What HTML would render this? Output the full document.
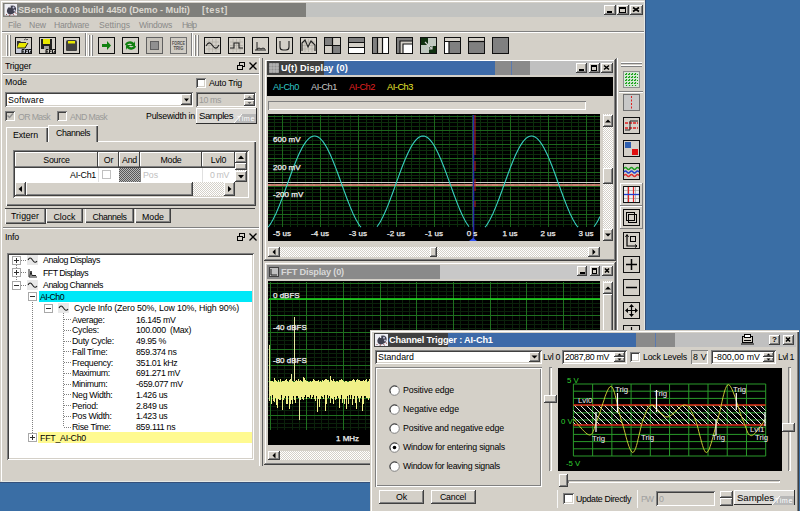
<!DOCTYPE html><html><head><meta charset="utf-8"><style>
html,body{margin:0;padding:0}
body{width:800px;height:511px;overflow:hidden;position:relative;background:#3a6ea5;font-family:"Liberation Sans",sans-serif}
div{position:absolute;box-sizing:border-box}
.t{white-space:pre}
</style></head><body>
<div style="left:0px;top:0px;width:646px;height:483px;background:#d4d0c8;box-shadow:inset -1px -1px #34507a,inset 1px 1px #d4d0c8,inset -2px -2px #e4e8e4,inset 2px 2px #fff"></div>
<div style="left:3px;top:3px;width:303px;height:14px;background:#7f7f7b"></div>
<div style="left:306px;top:3px;width:337px;height:14px;background:#c2c3c1"></div>
<svg style="position:absolute;left:4px;top:3px;" width="14" height="14" viewBox="0 0 14 14"><rect x="0.5" y="1" width="12.5" height="11.5" fill="#eeeef4"/><ellipse cx="7.5" cy="7" rx="5" ry="4" fill="#404050" transform="rotate(-40 7.5 7)"/><circle cx="6" cy="3.8" r="0.9" fill="#fff"/><circle cx="9.5" cy="4.5" r="1" fill="#c8c8e0"/><circle cx="10.5" cy="7.5" r="0.9" fill="#d0d0e8"/><path d="M3 11l-1 1M6 11.5l-0.5 1.5M9 11l1 1.5M11 9.5l1.5 1" stroke="#904040" stroke-width="0.9"/></svg>
<div class="t" style="left:18px;top:4.00px;font-size:9.2px;line-height:12px;color:#dcd8d0;font-weight:bold;letter-spacing:-0.047px;">SBench 6.0.09 build 4450 (Demo - Multi)</div>
<div class="t" style="left:202px;top:4.00px;font-size:9.2px;line-height:12px;color:#dcd8d0;font-weight:bold;letter-spacing:0.585px;">[test]</div>
<div style="left:604px;top:5px;width:12px;height:10px;background:#d4d0c8;box-shadow:inset -1px -1px #404040,inset 1px 1px #fff,inset -2px -2px #808080,inset 2px 2px #d4d0c8;"></div>
<div style="left:607px;top:11px;width:5px;height:2px;background:#000"></div>
<div style="left:617px;top:5px;width:12px;height:10px;background:#d4d0c8;box-shadow:inset -1px -1px #404040,inset 1px 1px #fff,inset -2px -2px #808080,inset 2px 2px #d4d0c8;"></div>
<div style="left:619px;top:6.5px;width:7px;height:6px;border:1px solid #000;border-top-width:2px;box-sizing:border-box"></div>
<div style="left:630px;top:5px;width:13px;height:10px;background:#d4d0c8;box-shadow:inset -1px -1px #404040,inset 1px 1px #fff,inset -2px -2px #808080,inset 2px 2px #d4d0c8;"></div>
<svg style="position:absolute;left:630px;top:5px;" width="13" height="10" viewBox="0 0 13 10"><path d="M3 2.5L9 6.5M9 2.5L3 6.5" stroke="#000" stroke-width="1.6"/></svg>
<div class="t" style="left:8px;top:19.00px;font-size:8.6px;line-height:12px;color:#8a8a88;letter-spacing:-0.214px;">File</div>
<div class="t" style="left:29px;top:19.00px;font-size:8.6px;line-height:12px;color:#8a8a88;letter-spacing:-0.068px;">New</div>
<div class="t" style="left:54px;top:19.00px;font-size:8.6px;line-height:12px;color:#8a8a88;letter-spacing:-0.285px;">Hardware</div>
<div class="t" style="left:99px;top:19.00px;font-size:8.6px;line-height:12px;color:#8a8a88;letter-spacing:-0.009px;">Settings</div>
<div class="t" style="left:139px;top:19.00px;font-size:8.6px;line-height:12px;color:#8a8a88;letter-spacing:-0.270px;">Windows</div>
<div class="t" style="left:182px;top:19.00px;font-size:8.6px;line-height:12px;color:#8a8a88;letter-spacing:-0.922px;">Help</div>
<div style="left:2px;top:31px;width:642px;height:1px;background:#808080"></div>
<div style="left:2px;top:32px;width:642px;height:1px;background:#fff"></div>
<div style="left:6px;top:35px;width:1px;height:21px;background:#fff"></div>
<div style="left:7px;top:35px;width:1px;height:21px;background:#808080"></div>
<div style="left:9px;top:35px;width:1px;height:21px;background:#fff"></div>
<div style="left:10px;top:35px;width:1px;height:21px;background:#808080"></div>
<div style="left:85px;top:33px;width:1px;height:24px;background:#808080"></div>
<div style="left:86px;top:33px;width:1px;height:24px;background:#fff"></div>
<div style="left:88px;top:35px;width:1px;height:21px;background:#fff"></div>
<div style="left:89px;top:35px;width:1px;height:21px;background:#808080"></div>
<div style="left:91px;top:35px;width:1px;height:21px;background:#fff"></div>
<div style="left:92px;top:35px;width:1px;height:21px;background:#808080"></div>
<div style="left:191px;top:33px;width:1px;height:24px;background:#808080"></div>
<div style="left:192px;top:33px;width:1px;height:24px;background:#fff"></div>
<div style="left:194px;top:35px;width:1px;height:21px;background:#fff"></div>
<div style="left:195px;top:35px;width:1px;height:21px;background:#808080"></div>
<div style="left:197px;top:35px;width:1px;height:21px;background:#fff"></div>
<div style="left:198px;top:35px;width:1px;height:21px;background:#808080"></div>
<div style="left:2px;top:56px;width:258px;height:1px;background:#f4f4f0"></div>
<div style="left:2px;top:57px;width:258px;height:1px;background:#c0bcb4"></div>
<div style="left:15px;top:37px;width:17px;height:17px;background:#c8ccd8;border:1px solid #101010;box-sizing:border-box"></div>
<svg style="position:absolute;left:15px;top:37px;" width="17" height="17" viewBox="0 0 17 17"><path d="M1 1h15v10H1z" fill="#d4d0c8"/><path d="M2 4h3l1 1h5v6H2z" fill="#303030"/><path d="M2 11l2-5h9l-3 5z" fill="#e8e800"/><path d="M2 11h8l3-5" stroke="#202020" fill="none"/><path d="M9 3q1.5-2 3 0l1-1" stroke="#303030" fill="none" stroke-width="0.8"/><path d="M9.5 12.5h-2.5v3.5h2.5M7 14.2h2M10.5 16v-3.5h2.5M10.5 14.2h2M16 12.5h-2.5v3.5h2.5v-1.7h-1" stroke="#101010" stroke-width="1" fill="none"/></svg>
<div style="left:39px;top:37px;width:17px;height:17px;background:#d4d0c8;border:1px solid #101010;box-sizing:border-box"></div>
<svg style="position:absolute;left:39px;top:37px;" width="17" height="17" viewBox="0 0 17 17"><rect x="2" y="2" width="11" height="10" fill="#202020"/><rect x="4" y="2" width="7" height="5" fill="#e8e800"/><rect x="5" y="9" width="5" height="3" fill="#a0a0a0"/><path d="M9.5 12.5h-2.5v3.5h2.5M7 14.2h2M10.5 16v-3.5h2.5M10.5 14.2h2M16 12.5h-2.5v3.5h2.5v-1.7h-1" stroke="#101010" stroke-width="1" fill="none"/></svg>
<div style="left:63px;top:37px;width:17px;height:17px;background:#d4d0c8;border:1px solid #101010;box-sizing:border-box"></div>
<svg style="position:absolute;left:63px;top:37px;" width="17" height="17" viewBox="0 0 17 17"><path d="M3 5q0-2 2-2h7q2 0 2 2v8q0 1-1 1H4q-1 0-1-1z" fill="#404040"/><rect x="5" y="4" width="7" height="2.5" fill="#e8e800"/></svg>
<div style="left:98px;top:37px;width:17px;height:17px;background:#d4d0c8;border:1px solid #101010;box-sizing:border-box"></div>
<svg style="position:absolute;left:98px;top:37px;" width="17" height="17" viewBox="0 0 17 17"><path d="M4 7h5V4l4 4.5-4 4.5V10H4z" fill="#108010"/></svg>
<div style="left:122px;top:37px;width:17px;height:17px;background:#d4d0c8;border:1px solid #101010;box-sizing:border-box"></div>
<svg style="position:absolute;left:122px;top:37px;" width="17" height="17" viewBox="0 0 17 17"><path d="M3 8a5 4 0 0 1 9-2l1-2v5h-5l2-1.5a3 2.5 0 0 0-5 1z M14 9a5 4 0 0 1-9 2l-1 2V8h5l-2 1.5a3 2.5 0 0 0 5-1z" fill="#108010"/></svg>
<div style="left:146px;top:37px;width:17px;height:17px;background:#c8c4bc;border:1px solid #606060;box-sizing:border-box"></div>
<svg style="position:absolute;left:146px;top:37px;" width="17" height="17" viewBox="0 0 17 17"><rect x="4.5" y="4.5" width="8" height="8" fill="#909090" stroke="#606060"/></svg>
<div style="left:170px;top:37px;width:17px;height:17px;background:#d0ccc4;border:1px solid #707070;box-sizing:border-box"></div>
<svg style="position:absolute;left:170px;top:37px;" width="17" height="17" viewBox="0 0 17 17"><text x="8.5" y="7.5" font-size="4.6" font-family="Liberation Sans" font-weight="bold" fill="#505050" text-anchor="middle" textLength="13" lengthAdjust="spacingAndGlyphs">FORCE</text><text x="8.5" y="13" font-size="5" font-family="Liberation Sans" font-weight="bold" fill="#505050" text-anchor="middle" textLength="10" lengthAdjust="spacingAndGlyphs">TRIG</text></svg>
<div style="left:204px;top:37px;width:17px;height:17px;background:#d4d0c8;border:1px solid #101010;box-sizing:border-box"></div>
<svg style="position:absolute;left:204px;top:37px;" width="17" height="17" viewBox="0 0 17 17"><path d="M2 5h13M2 8.5h13M2 12h13M5 2v13M8.5 2v13M12 2v13" stroke="#b0aca4" stroke-width="0.7"/><path d="M2 9 Q5 3 8.5 8.5 T15 8" stroke="#202020" fill="none" stroke-width="1.1"/></svg>
<div style="left:228px;top:37px;width:17px;height:17px;background:#d4d0c8;border:1px solid #101010;box-sizing:border-box"></div>
<svg style="position:absolute;left:228px;top:37px;" width="17" height="17" viewBox="0 0 17 17"><path d="M2 5h13M2 8.5h13M2 12h13M5 2v13M8.5 2v13M12 2v13" stroke="#b0aca4" stroke-width="0.7"/><path d="M2 11h4V6h5v5h4" stroke="#202020" fill="none" stroke-width="1.1"/></svg>
<div style="left:252px;top:37px;width:17px;height:17px;background:#d4d0c8;border:1px solid #101010;box-sizing:border-box"></div>
<svg style="position:absolute;left:252px;top:37px;" width="17" height="17" viewBox="0 0 17 17"><path d="M3 13h11M5 13V5M5 12l2-1 2 1 2-1 2 1" stroke="#202020" fill="none" stroke-width="1"/></svg>
<div style="left:276px;top:37px;width:17px;height:17px;background:#d4d0c8;border:1px solid #101010;box-sizing:border-box"></div>
<svg style="position:absolute;left:276px;top:37px;" width="17" height="17" viewBox="0 0 17 17"><path d="M4 4v6q0 3 3 3h3q3 0 3-3V4" stroke="#202020" fill="none" stroke-width="1.1"/></svg>
<div style="left:300px;top:37px;width:17px;height:17px;background:#d4d0c8;border:1px solid #101010;box-sizing:border-box"></div>
<svg style="position:absolute;left:300px;top:37px;" width="17" height="17" viewBox="0 0 17 17"><path d="M2 5h13M2 8.5h13M2 12h13M5 2v13M8.5 2v13M12 2v13" stroke="#b0aca4" stroke-width="0.7"/><path d="M2 14V6l3-3 3 7 3-6 4 4v6" stroke="#202020" fill="none" stroke-width="1.1"/></svg>
<div style="left:324px;top:37px;width:17px;height:17px;background:#d4d0c8;border:1px solid #101010;box-sizing:border-box"></div>
<svg style="position:absolute;left:324px;top:37px;" width="17" height="17" viewBox="0 0 17 17"><rect x="1" y="1" width="7.5" height="7.5" fill="#808080"/><rect x="8.5" y="8.5" width="7.5" height="7.5" fill="#808080"/><path d="M8.5 1v15M1 8.5h15" stroke="#101010" stroke-width="1.2"/></svg>
<div style="left:348px;top:37px;width:17px;height:17px;background:#d4d0c8;border:1px solid #101010;box-sizing:border-box"></div>
<svg style="position:absolute;left:348px;top:37px;" width="17" height="17" viewBox="0 0 17 17"><rect x="1" y="1" width="15" height="4" fill="#808080"/><rect x="1" y="11" width="15" height="5" fill="#fff"/><path d="M1 5.5h15M1 10.5h15" stroke="#101010" stroke-width="1.2"/></svg>
<div style="left:372px;top:37px;width:17px;height:17px;background:#d4d0c8;border:1px solid #101010;box-sizing:border-box"></div>
<svg style="position:absolute;left:372px;top:37px;" width="17" height="17" viewBox="0 0 17 17"><rect x="1" y="1" width="4" height="15" fill="#808080"/><rect x="11" y="1" width="5" height="15" fill="#fff"/><path d="M5.5 1v15M10.5 1v15" stroke="#101010" stroke-width="1.2"/></svg>
<div style="left:396px;top:37px;width:17px;height:17px;background:#d4d0c8;border:1px solid #101010;box-sizing:border-box"></div>
<svg style="position:absolute;left:396px;top:37px;" width="17" height="17" viewBox="0 0 17 17"><rect x="1" y="1" width="15" height="15" fill="#808080"/><rect x="4" y="4" width="12" height="12" fill="#d4d0c8"/><rect x="7" y="7" width="9" height="9" fill="#fff"/><path d="M4 16V4h12M7 16V7h9" stroke="#101010" stroke-width="1.1" fill="none"/></svg>
<div style="left:420px;top:37px;width:17px;height:17px;background:#c0c8c0;border:1px solid #101010;box-sizing:border-box"></div>
<svg style="position:absolute;left:420px;top:37px;" width="17" height="17" viewBox="0 0 17 17"><rect x="1" y="1" width="7" height="7" fill="#103010"/><rect x="9" y="9" width="7" height="7" fill="#103010"/><path d="M5 5l7 7M12 8v4H8" stroke="#d0d0d0" stroke-width="1.2" fill="none"/></svg>
<div style="left:444px;top:37px;width:17px;height:17px;background:#d4d0c8;border:1px solid #101010;box-sizing:border-box"></div>
<svg style="position:absolute;left:444px;top:37px;" width="17" height="17" viewBox="0 0 17 17"><rect x="1" y="5" width="15" height="11" fill="#808080"/><rect x="1" y="5" width="4" height="11" fill="#fff"/><path d="M1 4.5h15M5 5v11" stroke="#101010" stroke-width="1.2"/></svg>
<div style="left:468px;top:37px;width:17px;height:17px;background:#d4d0c8;border:1px solid #101010;box-sizing:border-box"></div>
<svg style="position:absolute;left:468px;top:37px;" width="17" height="17" viewBox="0 0 17 17"><rect x="1" y="5" width="15" height="11" fill="#808080"/><path d="M1 4.5h15" stroke="#101010" stroke-width="1.2"/></svg>
<div style="left:492px;top:37px;width:17px;height:17px;background:#808080;border:1px solid #101010;box-sizing:border-box"></div>
<div class="t" style="left:5px;top:59.50px;font-size:8.8px;line-height:12px;color:#000;letter-spacing:-0.197px;">Trigger</div>
<svg style="position:absolute;left:236px;top:61px;" width="10" height="10" viewBox="0 0 10 10"><rect x="3.5" y="1.5" width="5" height="4" fill="none" stroke="#000"/><rect x="1.5" y="4.5" width="5" height="4" fill="#d4d0c8" stroke="#000"/></svg>
<svg style="position:absolute;left:248px;top:61px;" width="10" height="10" viewBox="0 0 10 10"><path d="M1.5 1.5l7 7M8.5 1.5l-7 7" stroke="#000" stroke-width="1.3"/></svg>
<div style="left:3px;top:73px;width:256px;height:1px;background:#808080"></div>
<div style="left:3px;top:74px;width:256px;height:1px;background:#fff"></div>
<div class="t" style="left:5px;top:76.00px;font-size:8.8px;line-height:12px;color:#000;letter-spacing:-0.003px;">Mode</div>
<div style="left:196px;top:78px;width:10px;height:10px;background:#fff;box-shadow:inset 1px 1px #808080,inset -1px -1px #fff,inset 2px 2px #404040,inset -2px -2px #d4d0c8;"></div>
<div class="t" style="left:209px;top:77.00px;font-size:8.8px;line-height:12px;color:#000;letter-spacing:-0.246px;">Auto Trig</div>
<div style="left:5px;top:92px;width:188px;height:15px;background:#fff;box-shadow:inset 1px 1px #808080,inset -1px -1px #fff,inset 2px 2px #404040,inset -2px -2px #d4d0c8;"></div>
<div class="t" style="left:8px;top:93.50px;font-size:8.8px;line-height:12px;color:#000;letter-spacing:0.159px;">Software</div>
<div style="left:181px;top:94px;width:11px;height:11px;background:#d4d0c8;box-shadow:inset -1px -1px #404040,inset 1px 1px #fff,inset -2px -2px #808080,inset 2px 2px #d4d0c8;"></div>
<svg style="position:absolute;left:181px;top:94px;" width="11" height="11" viewBox="0 0 11 11"><path d="M3 4.5h5l-2.5 3z" fill="#000"/></svg>
<div style="left:196px;top:92px;width:60px;height:15px;background:#d4d0c8;box-shadow:inset 1px 1px #808080,inset -1px -1px #fff,inset 2px 2px #404040,inset -2px -2px #d4d0c8;"></div>
<div class="t" style="left:199px;top:93.50px;font-size:8.8px;line-height:12px;color:#9a9a98;letter-spacing:-0.393px;">10 ms</div>
<div style="left:244px;top:94px;width:11px;height:6px;background:#d4d0c8;box-shadow:inset -1px -1px #404040,inset 1px 1px #fff,inset -2px -2px #808080,inset 2px 2px #d4d0c8;"></div>
<div style="left:244px;top:100px;width:11px;height:6px;background:#d4d0c8;box-shadow:inset -1px -1px #404040,inset 1px 1px #fff,inset -2px -2px #808080,inset 2px 2px #d4d0c8;"></div>
<svg style="position:absolute;left:244px;top:94px;" width="11" height="12" viewBox="0 0 11 12"><path d="M3.5 4h4l-2-2z M3.5 8h4l-2 2z" fill="#606060"/></svg>
<div style="left:5px;top:111px;width:10px;height:10px;background:#d4d0c8;box-shadow:inset 1px 1px #808080,inset -1px -1px #fff,inset 2px 2px #404040,inset -2px -2px #d4d0c8;"></div>
<svg style="position:absolute;left:5px;top:111px;" width="10" height="10" viewBox="0 0 10 10"><path d="M2.5 4.5l2 2 3.5-4" stroke="#909090" stroke-width="1.5" fill="none"/></svg>
<div class="t" style="left:18px;top:110.50px;font-size:8.8px;line-height:12px;color:#9a9a98;letter-spacing:-0.667px;">OR Mask</div>
<div style="left:57px;top:111px;width:10px;height:10px;background:#d4d0c8;box-shadow:inset 1px 1px #808080,inset -1px -1px #fff,inset 2px 2px #404040,inset -2px -2px #d4d0c8;"></div>
<div class="t" style="left:70px;top:110.50px;font-size:8.8px;line-height:12px;color:#9a9a98;letter-spacing:-0.631px;">AND Mask</div>
<div class="t" style="left:146px;top:110.00px;font-size:8.8px;line-height:12px;color:#000;letter-spacing:-0.219px;">Pulsewidth in</div>
<div style="left:196px;top:108px;width:61px;height:16px;background:#dcdad6;box-shadow:inset -1px -1px #303030,inset 1px 1px #fff"></div>
<svg style="position:absolute;left:196px;top:108px;" width="61" height="15" viewBox="0 0 61 15"><path d="M38 15 L46 6 H60 V15 Z" fill="#b8b8b8"/><path d="M38 15 L46 6" stroke="#fff" stroke-width="1"/></svg>
<div class="t" style="left:199px;top:109.50px;font-size:9.6px;line-height:12px;color:#000;letter-spacing:-0.479px;">Samples</div>
<div class="t" style="left:46px;top:-6.00px;font-size:8px;line-height:12px;color:#000;letter-spacing:0.000px;"></div>
<div class="t" style="left:237px;top:112.50px;font-size:7.2px;line-height:12px;color:#fff;letter-spacing:0.566px;">Time</div>
<div style="left:6px;top:141px;width:250px;height:65px;box-shadow:inset 1px 1px #fff,inset -1px -1px #404040,inset -2px -2px #808080"></div>
<div style="left:6px;top:127px;width:42px;height:15px;background:#d4d0c8;box-shadow:inset 1px 1px #fff,inset -1px 0 #404040,inset -2px 0 #808080"></div>
<div class="t" style="left:13px;top:129.00px;font-size:8.8px;line-height:12px;color:#000;letter-spacing:-0.072px;">Extern</div>
<div style="left:48px;top:125px;width:50px;height:17px;background:#d4d0c8;box-shadow:inset 1px 1px #fff,inset -1px 0 #404040,inset -2px 0 #808080"></div>
<div class="t" style="left:56px;top:127.00px;font-size:8.8px;line-height:12px;color:#000;letter-spacing:-0.397px;">Channels</div>
<div style="left:13px;top:150px;width:236px;height:48px;background:#d4d0c8;box-shadow:inset 1px 1px #808080,inset -1px -1px #fff,inset 2px 2px #404040,inset -2px -2px #d4d0c8;"></div>
<div style="left:15px;top:152px;width:83px;height:15px;background:#d4d0c8;box-shadow:inset -1px -1px #808080,inset 1px 1px #fff;"></div>
<div style="left:97px;top:152px;width:1px;height:15px;background:#404040"></div>
<div class="t" style="left:43.2556640625px;top:153.50px;font-size:8.8px;line-height:12px;color:#000;letter-spacing:-0.232px;">Source</div>
<div style="left:98px;top:152px;width:21px;height:15px;background:#d4d0c8;box-shadow:inset -1px -1px #808080,inset 1px 1px #fff;"></div>
<div style="left:118px;top:152px;width:1px;height:15px;background:#404040"></div>
<div class="t" style="left:103.8561328125px;top:153.50px;font-size:8.8px;line-height:12px;color:#000;letter-spacing:-0.244px;">Or</div>
<div style="left:119px;top:152px;width:21px;height:15px;background:#d4d0c8;box-shadow:inset -1px -1px #808080,inset 1px 1px #fff;"></div>
<div style="left:139px;top:152px;width:1px;height:15px;background:#404040"></div>
<div class="t" style="left:122.0625390625px;top:153.50px;font-size:8.8px;line-height:12px;color:#000;letter-spacing:-0.261px;">And</div>
<div style="left:140px;top:152px;width:62px;height:15px;background:#d4d0c8;box-shadow:inset -1px -1px #808080,inset 1px 1px #fff;"></div>
<div style="left:201px;top:152px;width:1px;height:15px;background:#404040"></div>
<div class="t" style="left:160.5440625px;top:153.50px;font-size:8.8px;line-height:12px;color:#000;letter-spacing:-0.275px;">Mode</div>
<div style="left:202px;top:152px;width:33px;height:15px;background:#d4d0c8;box-shadow:inset -1px -1px #808080,inset 1px 1px #fff;"></div>
<div style="left:234px;top:152px;width:1px;height:15px;background:#404040"></div>
<div class="t" style="left:210.8324609375px;top:153.50px;font-size:8.8px;line-height:12px;color:#000;letter-spacing:-0.202px;">Lvl0</div>
<div style="left:15px;top:167px;width:220px;height:1px;background:#404040"></div>
<div style="left:15px;top:168px;width:83px;height:14px;background:#fff"></div>
<div class="t" style="left:70px;top:169.00px;font-size:8.8px;line-height:12px;color:#000;letter-spacing:-0.232px;">AI-Ch1</div>
<div style="left:98px;top:168px;width:21px;height:14px;background:#fff"></div>
<div style="left:102px;top:170px;width:9px;height:9px;border:1px solid #c0c0c0;background:#fff"></div>
<div style="left:119px;top:168px;width:21px;height:14px;background:repeating-conic-gradient(#585858 0 25%,#b8b8b8 0 50%) 0 0/2px 2px"></div>
<div style="left:140px;top:168px;width:62px;height:14px;background:#fff"></div>
<div class="t" style="left:143px;top:169.00px;font-size:8.8px;line-height:12px;color:#c0c0c0;letter-spacing:-0.055px;">Pos</div>
<div style="left:202px;top:168px;width:33px;height:14px;background:#fff"></div>
<div class="t" style="left:210px;top:169.00px;font-size:8.8px;line-height:12px;color:#c0c0c0;letter-spacing:-0.385px;">0 mV</div>
<div style="left:98px;top:168px;width:1px;height:14px;background:#e0e0e0"></div>
<div style="left:140px;top:168px;width:1px;height:14px;background:#808080"></div>
<div style="left:202px;top:168px;width:1px;height:14px;background:#e0e0e0"></div>
<div style="left:235px;top:152px;width:12px;height:30px;background:repeating-conic-gradient(#d4d0c8 0 25%,#fff 0 50%) 0 0/2px 2px"></div>
<div style="left:235px;top:152px;width:12px;height:11px;background:#d4d0c8;box-shadow:inset -1px -1px #404040,inset 1px 1px #fff,inset -2px -2px #808080,inset 2px 2px #d4d0c8;"></div>
<svg style="position:absolute;left:235px;top:152px;" width="12" height="11" viewBox="0 0 12 11"><path d="M3 7h6l-3-3.5z" fill="#000"/></svg>
<div style="left:235px;top:163px;width:12px;height:7px;background:#d4d0c8;box-shadow:inset -1px -1px #404040,inset 1px 1px #fff,inset -2px -2px #808080,inset 2px 2px #d4d0c8;"></div>
<div style="left:235px;top:171px;width:12px;height:11px;background:#d4d0c8;box-shadow:inset -1px -1px #404040,inset 1px 1px #fff,inset -2px -2px #808080,inset 2px 2px #d4d0c8;"></div>
<svg style="position:absolute;left:235px;top:171px;" width="12" height="11" viewBox="0 0 12 11"><path d="M3 4h6l-3 3.5z" fill="#000"/></svg>
<div style="left:15px;top:182px;width:220px;height:14px;background:repeating-conic-gradient(#d4d0c8 0 25%,#fff 0 50%) 0 0/2px 2px"></div>
<div style="left:15px;top:182px;width:11px;height:14px;background:#d4d0c8;box-shadow:inset -1px -1px #404040,inset 1px 1px #fff,inset -2px -2px #808080,inset 2px 2px #d4d0c8;"></div>
<svg style="position:absolute;left:15px;top:182px;" width="11" height="14" viewBox="0 0 11 14"><path d="M7 4v6l-3.5-3z" fill="#000"/></svg>
<div style="left:26px;top:182px;width:167px;height:14px;background:#d4d0c8;box-shadow:inset -1px -1px #404040,inset 1px 1px #fff,inset -2px -2px #808080,inset 2px 2px #d4d0c8;"></div>
<div style="left:224px;top:182px;width:11px;height:14px;background:#d4d0c8;box-shadow:inset -1px -1px #404040,inset 1px 1px #fff,inset -2px -2px #808080,inset 2px 2px #d4d0c8;"></div>
<svg style="position:absolute;left:224px;top:182px;" width="11" height="14" viewBox="0 0 11 14"><path d="M4 4v6l3.5-3z" fill="#000"/></svg>
<div style="left:235px;top:182px;width:12px;height:14px;background:#d4d0c8"></div>
<div style="left:5px;top:208px;width:41px;height:16px;background:#d4d0c8;box-shadow:inset 1px 0 #fff,inset -1px -1px #404040,inset -2px -2px #808080"></div>
<div class="t" style="left:11px;top:210.00px;font-size:8.8px;line-height:12px;color:#000;letter-spacing:0.065px;">Trigger</div>
<div style="left:46px;top:209px;width:37px;height:14px;box-shadow:inset 1px 0 #fff,inset -1px -1px #404040,inset -2px -2px #808080"></div>
<div class="t" style="left:53.5px;top:210.50px;font-size:8.8px;line-height:12px;color:#000;letter-spacing:-0.001px;">Clock</div>
<div style="left:85px;top:209px;width:49px;height:14px;box-shadow:inset 1px 0 #fff,inset -1px -1px #404040,inset -2px -2px #808080"></div>
<div class="t" style="left:92.5px;top:210.50px;font-size:8.8px;line-height:12px;color:#000;letter-spacing:-0.397px;">Channels</div>
<div style="left:135px;top:209px;width:36px;height:14px;box-shadow:inset 1px 0 #fff,inset -1px -1px #404040,inset -2px -2px #808080"></div>
<div class="t" style="left:142.0px;top:210.50px;font-size:8.8px;line-height:12px;color:#000;letter-spacing:-0.003px;">Mode</div>
<div style="left:5px;top:208px;width:250px;height:1px;background:#404040"></div>
<div style="left:3px;top:227px;width:256px;height:1px;background:#808080"></div>
<div style="left:3px;top:228px;width:256px;height:1px;background:#fff"></div>
<div class="t" style="left:5px;top:230.50px;font-size:8.8px;line-height:12px;color:#000;letter-spacing:-0.183px;">Info</div>
<svg style="position:absolute;left:236px;top:232px;" width="10" height="10" viewBox="0 0 10 10"><rect x="3.5" y="1.5" width="5" height="4" fill="none" stroke="#000"/><rect x="1.5" y="4.5" width="5" height="4" fill="#d4d0c8" stroke="#000"/></svg>
<svg style="position:absolute;left:248px;top:232px;" width="10" height="10" viewBox="0 0 10 10"><path d="M1.5 1.5l7 7M8.5 1.5l-7 7" stroke="#000" stroke-width="1.3"/></svg>
<div style="left:7px;top:253px;width:247px;height:207px;background:#fff;box-shadow:inset 1px 1px #808080,inset -1px -1px #fff,inset 2px 2px #404040,inset -2px -2px #d4d0c8;"></div>
<div style="left:16px;top:257px;width:1px;height:32px;background:repeating-linear-gradient(#808080 0 1px,transparent 1px 2px)"></div>
<div style="left:12px;top:255.5px;width:9px;height:9px;border:1px solid #a8a8a8;background:#fff"></div>
<div style="left:14px;top:259.5px;width:5px;height:1px;background:#303030"></div>
<div style="left:16px;top:257.5px;width:1px;height:5px;background:#303030"></div>
<div style="left:21px;top:260px;width:5px;height:1px;background:repeating-linear-gradient(90deg,#808080 0 1px,transparent 1px 2px)"></div>
<svg style="position:absolute;left:27px;top:255px;" width="11" height="10" viewBox="0 0 11 10"><rect x="0" y="0" width="11" height="10" fill="#e8e8e8"/><path d="M1 5 Q3 1 5.5 5 T10 6" stroke="#202020" fill="none" stroke-width="1.1"/></svg>
<div class="t" style="left:43px;top:254.00px;font-size:8.8px;line-height:12px;color:#000;letter-spacing:-0.406px;">Analog Displays</div>
<div style="left:12px;top:268.0px;width:9px;height:9px;border:1px solid #a8a8a8;background:#fff"></div>
<div style="left:14px;top:272.0px;width:5px;height:1px;background:#303030"></div>
<div style="left:16px;top:270.0px;width:1px;height:5px;background:#303030"></div>
<div style="left:21px;top:272px;width:5px;height:1px;background:repeating-linear-gradient(90deg,#808080 0 1px,transparent 1px 2px)"></div>
<svg style="position:absolute;left:27px;top:267.5px;" width="11" height="10" viewBox="0 0 11 10"><path d="M2 1v8h8M3 8l1-5 1 5 1-1 1 1 1-1 1 1" stroke="#202020" fill="none" stroke-width="1"/></svg>
<div class="t" style="left:43px;top:266.50px;font-size:8.8px;line-height:12px;color:#000;letter-spacing:-0.555px;">FFT Displays</div>
<div style="left:12px;top:280.5px;width:9px;height:9px;border:1px solid #a8a8a8;background:#fff"></div>
<div style="left:14px;top:284.5px;width:5px;height:1px;background:#303030"></div>
<div style="left:21px;top:285px;width:5px;height:1px;background:repeating-linear-gradient(90deg,#808080 0 1px,transparent 1px 2px)"></div>
<svg style="position:absolute;left:27px;top:280px;" width="11" height="10" viewBox="0 0 11 10"><rect x="0" y="0" width="11" height="10" fill="#e8e8e8"/><path d="M1 5 Q3 1 5.5 5 T10 6" stroke="#202020" fill="none" stroke-width="1.1"/></svg>
<div class="t" style="left:43px;top:279.00px;font-size:8.8px;line-height:12px;color:#000;letter-spacing:-0.468px;">Analog Channels</div>
<div style="left:32px;top:292px;width:1px;height:148px;background:repeating-linear-gradient(#808080 0 1px,transparent 1px 2px)"></div>
<div style="left:39px;top:291px;width:213px;height:11px;background:#00e8f8"></div>
<div style="left:28px;top:292px;width:9px;height:9px;border:1px solid #a8a8a8;background:#fff"></div>
<div style="left:30px;top:296px;width:5px;height:1px;background:#303030"></div>
<div class="t" style="left:40px;top:290.50px;font-size:8.8px;line-height:12px;color:#000;letter-spacing:-0.565px;">AI-Ch0</div>
<div style="left:44px;top:303.5px;width:9px;height:9px;border:1px solid #a8a8a8;background:#fff"></div>
<div style="left:46px;top:307.5px;width:5px;height:1px;background:#303030"></div>
<svg style="position:absolute;left:58px;top:303px;" width="11" height="10" viewBox="0 0 11 10"><rect x="0" y="0" width="11" height="10" fill="#e8e8e8"/><path d="M1 5 Q3 1 5.5 5 T10 6" stroke="#202020" fill="none" stroke-width="1.1"/></svg>
<div class="t" style="left:74px;top:302.00px;font-size:8.8px;line-height:12px;color:#000;letter-spacing:-0.118px;">Cycle Info (Zero 50%, Low 10%, High 90%)</div>
<div style="left:63px;top:313px;width:1px;height:114px;background:repeating-linear-gradient(#808080 0 1px,transparent 1px 2px)"></div>
<div style="left:64px;top:319px;width:7px;height:1px;background:repeating-linear-gradient(90deg,#808080 0 1px,transparent 1px 2px)"></div>
<div class="t" style="left:72px;top:313.50px;font-size:8.8px;line-height:12px;color:#000;letter-spacing:-0.307px;">Average:</div>
<div class="t" style="left:136px;top:313.50px;font-size:8.8px;line-height:12px;color:#000;letter-spacing:-0.331px;">16.145 mV</div>
<div style="left:64px;top:330px;width:7px;height:1px;background:repeating-linear-gradient(90deg,#808080 0 1px,transparent 1px 2px)"></div>
<div class="t" style="left:72px;top:324.25px;font-size:8.8px;line-height:12px;color:#000;letter-spacing:-0.288px;">Cycles:</div>
<div class="t" style="left:136px;top:324.25px;font-size:8.8px;line-height:12px;color:#000;letter-spacing:-0.296px;">100.000  (Max)</div>
<div style="left:64px;top:341px;width:7px;height:1px;background:repeating-linear-gradient(90deg,#808080 0 1px,transparent 1px 2px)"></div>
<div class="t" style="left:72px;top:335.00px;font-size:8.8px;line-height:12px;color:#000;letter-spacing:-0.286px;">Duty Cycle:</div>
<div class="t" style="left:136px;top:335.00px;font-size:8.8px;line-height:12px;color:#000;letter-spacing:-0.323px;">49.95 %</div>
<div style="left:64px;top:351px;width:7px;height:1px;background:repeating-linear-gradient(90deg,#808080 0 1px,transparent 1px 2px)"></div>
<div class="t" style="left:72px;top:345.75px;font-size:8.8px;line-height:12px;color:#000;letter-spacing:-0.267px;">Fall Time:</div>
<div class="t" style="left:136px;top:345.75px;font-size:8.8px;line-height:12px;color:#000;letter-spacing:-0.305px;">859.374 ns</div>
<div style="left:64px;top:362px;width:7px;height:1px;background:repeating-linear-gradient(90deg,#808080 0 1px,transparent 1px 2px)"></div>
<div class="t" style="left:72px;top:356.50px;font-size:8.8px;line-height:12px;color:#000;letter-spacing:-0.308px;">Frequency:</div>
<div class="t" style="left:136px;top:356.50px;font-size:8.8px;line-height:12px;color:#000;letter-spacing:-0.312px;">351.01 kHz</div>
<div style="left:64px;top:373px;width:7px;height:1px;background:repeating-linear-gradient(90deg,#808080 0 1px,transparent 1px 2px)"></div>
<div class="t" style="left:72px;top:367.25px;font-size:8.8px;line-height:12px;color:#000;letter-spacing:-0.355px;">Maximum:</div>
<div class="t" style="left:136px;top:367.25px;font-size:8.8px;line-height:12px;color:#000;letter-spacing:-0.332px;">691.271 mV</div>
<div style="left:64px;top:384px;width:7px;height:1px;background:repeating-linear-gradient(90deg,#808080 0 1px,transparent 1px 2px)"></div>
<div class="t" style="left:72px;top:378.00px;font-size:8.8px;line-height:12px;color:#000;letter-spacing:-0.334px;">Minimum:</div>
<div class="t" style="left:136px;top:378.00px;font-size:8.8px;line-height:12px;color:#000;letter-spacing:-0.321px;">-659.077 mV</div>
<div style="left:64px;top:394px;width:7px;height:1px;background:repeating-linear-gradient(90deg,#808080 0 1px,transparent 1px 2px)"></div>
<div class="t" style="left:72px;top:388.75px;font-size:8.8px;line-height:12px;color:#000;letter-spacing:-0.305px;">Neg Width:</div>
<div class="t" style="left:136px;top:388.75px;font-size:8.8px;line-height:12px;color:#000;letter-spacing:-0.295px;">1.426 us</div>
<div style="left:64px;top:405px;width:7px;height:1px;background:repeating-linear-gradient(90deg,#808080 0 1px,transparent 1px 2px)"></div>
<div class="t" style="left:72px;top:399.50px;font-size:8.8px;line-height:12px;color:#000;letter-spacing:-0.279px;">Period:</div>
<div class="t" style="left:136px;top:399.50px;font-size:8.8px;line-height:12px;color:#000;letter-spacing:-0.295px;">2.849 us</div>
<div style="left:64px;top:416px;width:7px;height:1px;background:repeating-linear-gradient(90deg,#808080 0 1px,transparent 1px 2px)"></div>
<div class="t" style="left:72px;top:410.25px;font-size:8.8px;line-height:12px;color:#000;letter-spacing:-0.298px;">Pos Width:</div>
<div class="t" style="left:136px;top:410.25px;font-size:8.8px;line-height:12px;color:#000;letter-spacing:-0.295px;">1.423 us</div>
<div style="left:64px;top:427px;width:7px;height:1px;background:repeating-linear-gradient(90deg,#808080 0 1px,transparent 1px 2px)"></div>
<div class="t" style="left:72px;top:421.00px;font-size:8.8px;line-height:12px;color:#000;letter-spacing:-0.291px;">Rise Time:</div>
<div class="t" style="left:136px;top:421.00px;font-size:8.8px;line-height:12px;color:#000;letter-spacing:-0.296px;">859.111 ns</div>
<div style="left:38px;top:432px;width:214px;height:11px;background:#fffa90"></div>
<div style="left:28px;top:433px;width:9px;height:9px;border:1px solid #a8a8a8;background:#fff"></div>
<div style="left:30px;top:437px;width:5px;height:1px;background:#303030"></div>
<div style="left:32px;top:435px;width:1px;height:5px;background:#303030"></div>
<div class="t" style="left:40px;top:432.00px;font-size:8.8px;line-height:12px;color:#000;letter-spacing:-0.241px;">FFT_AI-Ch0</div>
<div style="left:259px;top:58px;width:1px;height:408px;background:#fff"></div>
<div style="left:262px;top:58px;width:1px;height:408px;background:#606060"></div>
<div style="left:264px;top:59px;width:352px;height:202px;background:#d4d0c8;box-shadow:inset -1px -1px #404040,inset 1px 1px #d4d0c8,inset -2px -2px #808080,inset 2px 2px #fff"></div>
<div style="left:267px;top:61px;width:57px;height:14px;background:#404040"></div>
<div style="left:324px;top:61px;width:171px;height:14px;background:#3d6aa8"></div>
<div style="left:495px;top:61px;width:35px;height:14px;background:#8a8a8a"></div>
<div style="left:511px;top:61px;width:1px;height:14px;background:#5a7ab0"></div>
<div style="left:530px;top:61px;width:83px;height:14px;background:#c0c0c0"></div>
<svg style="position:absolute;left:269px;top:63px;" width="10" height="10" viewBox="0 0 10 10"><rect width="10" height="10" fill="#909090"/><path d="M0 2h10M0 5h10M0 8h10M2 0v10M5 0v10M8 0v10" stroke="#d0d0d0" stroke-width="0.6"/></svg>
<div class="t" style="left:281px;top:62.00px;font-size:9.2px;line-height:12px;color:#fff;font-weight:bold;letter-spacing:0.130px;">U(t) Display (0)</div>
<div style="left:576px;top:63px;width:11px;height:10px;background:#d4d0c8;box-shadow:inset -1px -1px #404040,inset 1px 1px #fff,inset -2px -2px #808080,inset 2px 2px #d4d0c8;"></div>
<div style="left:579px;top:69px;width:5px;height:2px;background:#000"></div>
<div style="left:589px;top:63px;width:11px;height:10px;background:#d4d0c8;box-shadow:inset -1px -1px #404040,inset 1px 1px #fff,inset -2px -2px #808080,inset 2px 2px #d4d0c8;"></div>
<div style="left:591px;top:64.5px;width:6px;height:6px;border:1px solid #000;border-top-width:2px;box-sizing:border-box"></div>
<div style="left:601px;top:63px;width:12px;height:10px;background:#d4d0c8;box-shadow:inset -1px -1px #404040,inset 1px 1px #fff,inset -2px -2px #808080,inset 2px 2px #d4d0c8;"></div>
<svg style="position:absolute;left:601px;top:63px;" width="12" height="10" viewBox="0 0 12 10"><path d="M3 2.5L8 6.5M8 2.5L3 6.5" stroke="#000" stroke-width="1.6"/></svg>
<div style="left:267px;top:77px;width:346px;height:19px;background:#000"></div>
<div class="t" style="left:273px;top:81.00px;font-size:9.2px;line-height:12px;color:#30c8c8;letter-spacing:-0.439px;">AI-Ch0</div>
<div class="t" style="left:311px;top:81.00px;font-size:9.2px;line-height:12px;color:#c8c8c8;letter-spacing:-0.439px;">AI-Ch1</div>
<div class="t" style="left:349px;top:81.00px;font-size:9.2px;line-height:12px;color:#e02020;letter-spacing:-0.439px;">AI-Ch2</div>
<div class="t" style="left:387px;top:81.00px;font-size:9.2px;line-height:12px;color:#e8e830;letter-spacing:-0.439px;">AI-Ch3</div>
<div style="left:268px;top:101px;width:318px;height:9px;background:#d8d4cc;box-shadow:inset 1px 1px #808080,inset -1px -1px #fff;"></div>
<svg style="position:absolute;left:268px;top:114px;shape-rendering:auto" width="332" height="127" viewBox="0 0 332 127"><rect width="332" height="127" fill="#000"/><path d="M6.5 1V113M14.5 1V113M22.5 1V113M29.5 1V113M37.5 1V113M44.5 1V113M52.5 1V113M60.5 1V113M67.5 1V113M75.5 1V113M82.5 1V113M90.5 1V113M98.5 1V113M105.5 1V113M113.5 1V113M120.5 1V113M128.5 1V113M136.5 1V113M143.5 1V113M151.5 1V113M158.5 1V113M166.5 1V113M174.5 1V113M181.5 1V113M189.5 1V113M196.5 1V113M204.5 1V113M212.5 1V113M219.5 1V113M227.5 1V113M234.5 1V113M242.5 1V113M250.5 1V113M257.5 1V113M265.5 1V113M272.5 1V113M280.5 1V113M288.5 1V113M295.5 1V113M303.5 1V113M310.5 1V113M318.5 1V113M326.5 1V113M0 2.5H332M0 5.5H332M0 8.5H332M0 12.5H332M0 16.5H332M0 19.5H332M0 22.5H332M0 26.5H332M0 30.5H332M0 33.5H332M0 36.5H332M0 40.5H332M0 44.5H332M0 47.5H332M0 50.5H332M0 54.5H332M0 58.5H332M0 61.5H332M0 64.5H332M0 68.5H332M0 72.5H332M0 75.5H332M0 78.5H332M0 82.5H332M0 86.5H332M0 89.5H332M0 92.5H332M0 96.5H332M0 100.5H332M0 103.5H332M0 106.5H332M0 110.5H332" stroke="#0c2e0c" stroke-width="1" fill="none" shape-rendering="crispEdges"/><path d="M14.5 1V113M52.5 1V113M90.5 1V113M128.5 1V113M166.5 1V113M204.5 1V113M242.5 1V113M280.5 1V113M318.5 1V113M0 2.5H332M0 16.5H332M0 30.5H332M0 44.5H332M0 58.5H332M0 72.5H332M0 86.5H332M0 100.5H332" stroke="#1c661c" stroke-width="1" fill="none" shape-rendering="crispEdges"/><path d="M0 68.5H332" stroke="#d0d0c8" stroke-width="1"/><path d="M0 71H332" stroke="#c07868" stroke-width="2"/><path d="M0 71H332" stroke="#d88878" stroke-width="1.2" stroke-dasharray="3 5 6 4 2 7"/><polyline points="0.0,113.2 1.0,112.0 2.0,110.6 3.0,109.0 4.0,107.3 5.0,105.5 6.0,103.6 7.0,101.5 8.0,99.4 9.0,97.1 10.0,94.8 11.0,92.4 12.0,89.9 13.0,87.3 14.0,84.7 15.0,82.0 16.0,79.3 17.0,76.6 18.0,73.8 19.0,71.0 20.0,68.3 21.0,65.5 22.0,62.7 23.0,60.0 24.0,57.3 25.0,54.6 26.0,52.0 27.0,49.5 28.0,47.0 29.0,44.6 30.0,42.3 31.0,40.1 32.0,38.0 33.0,35.9 34.0,34.0 35.0,32.3 36.0,30.6 37.0,29.1 38.0,27.7 39.0,26.5 40.0,25.4 41.0,24.4 42.0,23.6 43.0,23.0 44.0,22.5 45.0,22.2 46.0,22.0 47.0,22.0 48.0,22.2 49.0,22.5 50.0,23.0 51.0,23.6 52.0,24.4 53.0,25.4 54.0,26.5 55.0,27.7 56.0,29.1 57.0,30.6 58.0,32.3 59.0,34.0 60.0,35.9 61.0,38.0 62.0,40.1 63.0,42.3 64.0,44.6 65.0,47.0 66.0,49.5 67.0,52.0 68.0,54.6 69.0,57.3 70.0,60.0 71.0,62.7 72.0,65.5 73.0,68.3 74.0,71.0 75.0,73.8 76.0,76.6 77.0,79.3 78.0,82.0 79.0,84.7 80.0,87.3 81.0,89.9 82.0,92.4 83.0,94.8 84.0,97.1 85.0,99.4 86.0,101.5 87.0,103.6 88.0,105.5 89.0,107.3 90.0,109.0 91.0,110.6 92.0,112.0 93.0,113.2" stroke="#38d0c0" fill="none" stroke-width="1.1"/><polyline points="109.0,112.6 110.0,111.3 111.0,109.8 112.0,108.2 113.0,106.4 114.0,104.5 115.0,102.6 116.0,100.5 117.0,98.3 118.0,96.0 119.0,93.6 120.0,91.1 121.0,88.6 122.0,86.0 123.0,83.4 124.0,80.7 125.0,78.0 126.0,75.2 127.0,72.4 128.0,69.7 129.0,66.9 130.0,64.1 131.0,61.4 132.0,58.6 133.0,56.0 134.0,53.3 135.0,50.8 136.0,48.2 137.0,45.8 138.0,43.4 139.0,41.2 140.0,39.0 141.0,36.9 142.0,35.0 143.0,33.1 144.0,31.4 145.0,29.8 146.0,28.4 147.0,27.1 148.0,25.9 149.0,24.9 150.0,24.0 151.0,23.3 152.0,22.7 153.0,22.3 154.0,22.1 155.0,22.0 156.0,22.1 157.0,22.3 158.0,22.7 159.0,23.3 160.0,24.0 161.0,24.9 162.0,25.9 163.0,27.1 164.0,28.4 165.0,29.8 166.0,31.4 167.0,33.1 168.0,35.0 169.0,36.9 170.0,39.0 171.0,41.2 172.0,43.4 173.0,45.8 174.0,48.2 175.0,50.8 176.0,53.3 177.0,56.0 178.0,58.6 179.0,61.4 180.0,64.1 181.0,66.9 182.0,69.7 183.0,72.4 184.0,75.2 185.0,78.0 186.0,80.7 187.0,83.4 188.0,86.0 189.0,88.6 190.0,91.1 191.0,93.6 192.0,96.0 193.0,98.3 194.0,100.5 195.0,102.6 196.0,104.5 197.0,106.4 198.0,108.2 199.0,109.8 200.0,111.3 201.0,112.6" stroke="#38d0c0" fill="none" stroke-width="1.1"/><polyline points="217.0,113.2 218.0,112.0 219.0,110.6 220.0,109.0 221.0,107.3 222.0,105.5 223.0,103.6 224.0,101.5 225.0,99.4 226.0,97.1 227.0,94.8 228.0,92.4 229.0,89.9 230.0,87.3 231.0,84.7 232.0,82.0 233.0,79.3 234.0,76.6 235.0,73.8 236.0,71.0 237.0,68.3 238.0,65.5 239.0,62.7 240.0,60.0 241.0,57.3 242.0,54.6 243.0,52.0 244.0,49.5 245.0,47.0 246.0,44.6 247.0,42.3 248.0,40.1 249.0,38.0 250.0,35.9 251.0,34.0 252.0,32.3 253.0,30.6 254.0,29.1 255.0,27.7 256.0,26.5 257.0,25.4 258.0,24.4 259.0,23.6 260.0,23.0 261.0,22.5 262.0,22.2 263.0,22.0 264.0,22.0 265.0,22.2 266.0,22.5 267.0,23.0 268.0,23.6 269.0,24.4 270.0,25.4 271.0,26.5 272.0,27.7 273.0,29.1 274.0,30.6 275.0,32.3 276.0,34.0 277.0,35.9 278.0,38.0 279.0,40.1 280.0,42.3 281.0,44.6 282.0,47.0 283.0,49.5 284.0,52.0 285.0,54.6 286.0,57.3 287.0,60.0 288.0,62.7 289.0,65.5 290.0,68.3 291.0,71.0 292.0,73.8 293.0,76.6 294.0,79.3 295.0,82.0 296.0,84.7 297.0,87.3 298.0,89.9 299.0,92.4 300.0,94.8 301.0,97.1 302.0,99.4 303.0,101.5 304.0,103.6 305.0,105.5 306.0,107.3 307.0,109.0 308.0,110.6 309.0,112.0 310.0,113.2" stroke="#38d0c0" fill="none" stroke-width="1.1"/><polyline points="326.0,112.6 327.0,111.3 328.0,109.8 329.0,108.2 330.0,106.4 331.0,104.5 332.0,102.6" stroke="#38d0c0" fill="none" stroke-width="1.1"/><path d="M205.5 1V127" stroke="#2828a8" stroke-width="1.6"/><path d="M207 1V113" stroke="#c02020" stroke-width="1" stroke-dasharray="40 6 10 8 12 10 6 40"/><text x="5" y="28" font-size="8" font-family="Liberation Sans" fill="#f4f4f4" stroke="#f4f4f4" stroke-width="0.25">600 mV</text><text x="5" y="55.5" font-size="8" font-family="Liberation Sans" fill="#f4f4f4" stroke="#f4f4f4" stroke-width="0.25">200 mV</text><text x="5" y="83" font-size="8" font-family="Liberation Sans" fill="#f4f4f4" stroke="#f4f4f4" stroke-width="0.25">-200 mV</text><text x="14" y="122" font-size="8" font-family="Liberation Sans" fill="#f0f0f0" stroke="#f0f0f0" stroke-width="0.25" text-anchor="middle">-5 us</text><text x="52" y="122" font-size="8" font-family="Liberation Sans" fill="#f0f0f0" stroke="#f0f0f0" stroke-width="0.25" text-anchor="middle">-4 us</text><text x="90" y="122" font-size="8" font-family="Liberation Sans" fill="#f0f0f0" stroke="#f0f0f0" stroke-width="0.25" text-anchor="middle">-3 us</text><text x="128" y="122" font-size="8" font-family="Liberation Sans" fill="#f0f0f0" stroke="#f0f0f0" stroke-width="0.25" text-anchor="middle">-2 us</text><text x="166" y="122" font-size="8" font-family="Liberation Sans" fill="#f0f0f0" stroke="#f0f0f0" stroke-width="0.25" text-anchor="middle">-1 us</text><text x="204" y="122" font-size="8" font-family="Liberation Sans" fill="#f0f0f0" stroke="#f0f0f0" stroke-width="0.25" text-anchor="middle">0 s</text><text x="242" y="122" font-size="8" font-family="Liberation Sans" fill="#f0f0f0" stroke="#f0f0f0" stroke-width="0.25" text-anchor="middle">1 us</text><text x="280" y="122" font-size="8" font-family="Liberation Sans" fill="#f0f0f0" stroke="#f0f0f0" stroke-width="0.25" text-anchor="middle">2 us</text><text x="318" y="122" font-size="8" font-family="Liberation Sans" fill="#f0f0f0" stroke="#f0f0f0" stroke-width="0.25" text-anchor="middle">3 us</text></svg>
<svg style="position:absolute;left:469px;top:238px;" width="8" height="3" viewBox="0 0 8 3"><path d="M0 3L4 0 8 3z" fill="#3050f0"/></svg>
<div style="left:603px;top:114px;width:10px;height:127px;background:repeating-conic-gradient(#d4d0c8 0 25%,#fff 0 50%) 0 0/2px 2px"></div>
<div style="left:603px;top:115px;width:10px;height:12px;background:#d4d0c8;box-shadow:inset -1px -1px #404040,inset 1px 1px #fff,inset -2px -2px #808080,inset 2px 2px #d4d0c8;"></div>
<svg style="position:absolute;left:603px;top:115px;" width="10" height="12" viewBox="0 0 10 12"><path d="M2.0 7.5h6l-3-3z" fill="#000"/></svg>
<div style="left:603px;top:168px;width:10px;height:16px;background:#d4d0c8;box-shadow:inset -1px -1px #404040,inset 1px 1px #fff,inset -2px -2px #808080,inset 2px 2px #d4d0c8;"></div>
<div style="left:603px;top:229px;width:10px;height:12px;background:#d4d0c8;box-shadow:inset -1px -1px #404040,inset 1px 1px #fff,inset -2px -2px #808080,inset 2px 2px #d4d0c8;"></div>
<svg style="position:absolute;left:603px;top:229px;" width="10" height="12" viewBox="0 0 10 12"><path d="M2.0 4.5h6l-3 3z" fill="#000"/></svg>
<div style="left:268px;top:247px;width:332px;height:10px;background:repeating-conic-gradient(#d4d0c8 0 25%,#fff 0 50%) 0 0/2px 2px"></div>
<div style="left:268px;top:247px;width:12px;height:10px;background:#d4d0c8;box-shadow:inset -1px -1px #404040,inset 1px 1px #fff,inset -2px -2px #808080,inset 2px 2px #d4d0c8;"></div>
<svg style="position:absolute;left:268px;top:247px;" width="12" height="10" viewBox="0 0 12 10"><path d="M7.5 2.0v6l-3-3z" fill="#000"/></svg>
<div style="left:430px;top:247px;width:7px;height:10px;background:#d4d0c8;box-shadow:inset -1px -1px #404040,inset 1px 1px #fff,inset -2px -2px #808080,inset 2px 2px #d4d0c8;"></div>
<div style="left:588px;top:247px;width:12px;height:10px;background:#d4d0c8;box-shadow:inset -1px -1px #404040,inset 1px 1px #fff,inset -2px -2px #808080,inset 2px 2px #d4d0c8;"></div>
<svg style="position:absolute;left:588px;top:247px;" width="12" height="10" viewBox="0 0 12 10"><path d="M4.5 2.0v6l3-3z" fill="#000"/></svg>
<div style="left:264px;top:262px;width:352px;height:203px;background:#d4d0c8;box-shadow:inset -1px -1px #404040,inset 1px 1px #d4d0c8,inset -2px -2px #808080,inset 2px 2px #fff"></div>
<div style="left:267px;top:265px;width:173px;height:14px;background:#8a8a8a"></div>
<div style="left:440px;top:265px;width:173px;height:14px;background:#c8c8c8"></div>
<svg style="position:absolute;left:269px;top:267px;" width="10" height="10" viewBox="0 0 10 10"><rect x="0.5" y="0.5" width="9" height="9" fill="#c0c0c0" stroke="#404040"/><path d="M2 8V2M2 8h6" stroke="#202020"/></svg>
<div class="t" style="left:281px;top:266.00px;font-size:9.2px;line-height:12px;color:#d8d8d8;font-weight:bold;letter-spacing:-0.196px;">FFT Display (0)</div>
<div style="left:577px;top:266px;width:10px;height:10px;background:#d4d0c8;box-shadow:inset -1px -1px #404040,inset 1px 1px #fff,inset -2px -2px #808080,inset 2px 2px #d4d0c8;"></div>
<div style="left:580px;top:272px;width:5px;height:2px;background:#000"></div>
<div style="left:590px;top:266px;width:10px;height:10px;background:#d4d0c8;box-shadow:inset -1px -1px #404040,inset 1px 1px #fff,inset -2px -2px #808080,inset 2px 2px #d4d0c8;"></div>
<div style="left:592px;top:267.5px;width:5px;height:6px;border:1px solid #000;border-top-width:2px;box-sizing:border-box"></div>
<div style="left:602px;top:266px;width:11px;height:10px;background:#d4d0c8;box-shadow:inset -1px -1px #404040,inset 1px 1px #fff,inset -2px -2px #808080,inset 2px 2px #d4d0c8;"></div>
<svg style="position:absolute;left:602px;top:266px;" width="11" height="10" viewBox="0 0 11 10"><path d="M3 2.5L7 6.5M7 2.5L3 6.5" stroke="#000" stroke-width="1.6"/></svg>
<svg style="position:absolute;left:268px;top:281px;shape-rendering:auto" width="332" height="164" viewBox="0 0 332 164"><rect width="332" height="164" fill="#000"/><path d="M2.5 1V149M9.5 1V149M16.5 1V149M24.5 1V149M31.5 1V149M38.5 1V149M46.5 1V149M53.5 1V149M60.5 1V149M68.5 1V149M75.5 1V149M82.5 1V149M90.5 1V149M97.5 1V149M104.5 1V149M112.5 1V149M119.5 1V149M126.5 1V149M134.5 1V149M141.5 1V149M148.5 1V149M156.5 1V149M163.5 1V149M170.5 1V149M178.5 1V149M185.5 1V149M192.5 1V149M200.5 1V149M207.5 1V149M214.5 1V149M222.5 1V149M229.5 1V149M236.5 1V149M244.5 1V149M251.5 1V149M258.5 1V149M266.5 1V149M273.5 1V149M280.5 1V149M288.5 1V149M295.5 1V149M302.5 1V149M310.5 1V149M317.5 1V149M324.5 1V149M332.5 1V149M0 2.5H332M0 6.5H332M0 10.5H332M0 14.5H332M0 18.5H332M0 22.5H332M0 26.5H332M0 30.5H332M0 34.5H332M0 39.5H332M0 43.5H332M0 47.5H332M0 51.5H332M0 55.5H332M0 59.5H332M0 63.5H332M0 68.5H332M0 72.5H332M0 76.5H332M0 80.5H332M0 84.5H332M0 88.5H332M0 92.5H332M0 96.5H332M0 100.5H332M0 105.5H332M0 109.5H332M0 113.5H332M0 117.5H332M0 121.5H332M0 125.5H332M0 129.5H332M0 134.5H332M0 138.5H332M0 142.5H332M0 146.5H332" stroke="#0b220b" stroke-width="1" fill="none" shape-rendering="crispEdges"/><path d="M2.5 1V149M38.5 1V149M75.5 1V149M112.5 1V149M148.5 1V149M185.5 1V149M222.5 1V149M258.5 1V149M295.5 1V149M332.5 1V149M0 2.5H332M0 18.5H332M0 34.5H332M0 51.5H332M0 68.5H332M0 84.5H332M0 100.5H332M0 117.5H332M0 134.5H332" stroke="#1f701f" stroke-width="1" fill="none" shape-rendering="crispEdges"/><path d="M1 18H332" stroke="#20e020" stroke-width="1.6"/><path d="M1.5 99.4V118.6M2.5 99.5V114.9M3.5 99.9V123.1M4.5 100.4V114.2M5.5 100.9V120.2M6.5 97.0V120.5M7.5 99.3V116.6M8.5 99.5V124.3M9.5 101.0V127.1M10.5 98.9V117.8M11.5 100.5V118.8M12.5 98.0V118.6M13.5 100.9V114.4M14.5 100.3V129.2M15.5 100.3V118.5M16.5 100.4V116.8M17.5 98.6V114.7M18.5 98.3V122.9M19.5 100.4V123.4M20.5 100.6V114.5M21.5 98.6V127.9M22.5 98.2V122.9M23.5 99.1V118.8M24.5 99.7V122.5M25.5 100.5V114.9M26.5 100.8V118.8M27.5 99.8V122.3M28.5 98.7V115.3M29.5 99.8V114.9M30.5 98.2V116.8M31.5 99.8V121.7M32.5 98.8V119.1M33.5 99.7V115.8M34.5 100.9V117.5M35.5 96.4V118.6M36.5 97.0V116.4M37.5 99.0V114.4M38.5 100.2V117.7M39.5 100.4V115.8M40.5 100.7V116.1M41.5 100.6V117.1M42.5 99.7V114.4M43.5 101.0V117.6M44.5 100.2V116.2M45.5 98.3V114.1M46.5 99.4V117.5M47.5 99.8V119.8M48.5 100.0V114.8M49.5 100.0V131.1M50.5 98.6V118.0M51.5 100.6V125.9M52.5 99.5V118.2M53.5 100.9V114.8M54.5 98.8V116.1M55.5 99.5V118.2M56.5 99.4V114.2M57.5 98.1V130.4M58.5 98.1V123.4M59.5 98.7V114.2M60.5 99.3V117.3M61.5 100.9V115.0M62.5 95.1V121.9M63.5 99.0V116.6M64.5 100.3V118.0M65.5 98.3V122.9M66.5 99.9V115.9M67.5 100.6V118.7M68.5 100.0V117.6M69.5 99.9V115.1M70.5 100.9V116.7M71.5 99.0V126.9M72.5 99.3V117.8M73.5 98.1V114.3M74.5 98.5V121.7M75.5 99.5V118.2M76.5 100.8V122.9M77.5 99.6V117.6M78.5 99.6V127.5M79.5 100.5V115.0M80.5 100.9V122.5M81.5 99.5V114.1M82.5 99.5V118.0M83.5 99.5V114.3M84.5 99.2V124.0M85.5 98.4V118.1M86.5 99.4V115.0M87.5 100.8V121.9M88.5 98.7V127.9M89.5 98.3V114.6M90.5 98.8V116.7M91.5 99.1V120.7M92.5 99.9V116.6M93.5 99.8V115.2M94.5 100.4V130.0M95.5 98.7V122.6M96.5 100.2V114.5M97.5 99.3V114.6M98.5 97.5V117.4M99.5 100.9V116.5M100.5 99.5V118.5M101.5 98.1V116.6M102.5 98.4V115.0M103.5 101.0V122.2M104.5 99.4V115.6M105.5 99.5V123.5M106.5 100.5V116.3M107.5 99.2V114.8M108.5 98.0V118.0M109.5 100.6V116.0M110.5 99.5V125.6M111.5 100.2V118.1M112.5 100.7V117.5M113.5 100.3V122.3M114.5 96.3V117.2M115.5 98.7V129.9M116.5 99.7V115.9M117.5 99.9V117.8M118.5 98.1V122.7M119.5 98.2V120.1M120.5 100.7V116.5M121.5 99.7V117.2M122.5 98.2V125.4M123.5 98.5V114.8M124.5 95.0V116.1M125.5 99.8V115.4M126.5 99.7V120.7M127.5 96.3V117.8M128.5 100.7V114.3M129.5 100.8V118.5M130.5 99.4V115.2M131.5 100.8V116.3M132.5 100.5V114.6M133.5 99.4V114.3M134.5 98.4V117.3M135.5 98.8V116.1M136.5 99.6V118.8M137.5 98.7V118.5M138.5 99.9V115.4M139.5 99.7V117.2M140.5 98.6V118.9M141.5 98.5V115.4M142.5 99.9V120.1M143.5 100.0V128.5M144.5 98.6V117.7M145.5 98.2V118.0M146.5 100.3V123.2M147.5 99.1V130.8M148.5 100.2V124.8M149.5 100.6V114.4M150.5 99.5V115.5M151.5 98.2V121.8M152.5 100.2V120.2M153.5 100.2V114.6M154.5 99.7V118.7M155.5 99.3V126.3M156.5 100.8V125.8M157.5 99.1V121.8M158.5 100.4V118.2M159.5 98.5V121.5M160.5 99.5V116.8M161.5 100.0V114.3M162.5 100.4V114.4M163.5 100.7V123.9M164.5 99.9V115.1M165.5 99.6V130.7M166.5 100.0V116.7M167.5 100.1V116.1M168.5 100.0V118.0M169.5 100.7V117.2M170.5 100.1V116.1M171.5 98.4V128.1M172.5 98.6V115.5M173.5 98.2V114.6M174.5 100.3V114.3M175.5 99.8V118.1M176.5 98.7V117.6M177.5 98.7V122.2M178.5 98.9V118.1M179.5 98.8V130.4M180.5 100.9V122.8M181.5 100.4V116.6M182.5 98.8V120.3M183.5 99.4V118.0M184.5 99.8V124.6M185.5 100.6V117.2M186.5 98.8V114.8M187.5 98.0V118.2M188.5 98.2V123.0M189.5 99.4V116.9M190.5 98.9V116.1M191.5 98.3V115.0M192.5 99.6V128.3M193.5 98.2V116.3M194.5 99.1V114.5M195.5 99.4V118.1M196.5 98.0V123.4M197.5 94.4V124.1M198.5 98.9V121.4M199.5 99.2V121.9M200.5 99.0V116.8M201.5 99.0V117.9M202.5 100.0V114.9M203.5 100.5V118.2M204.5 98.4V114.4M205.5 99.3V117.2M206.5 100.5V115.7M207.5 98.0V117.5M208.5 100.4V121.7M209.5 99.0V126.1M210.5 100.4V123.9M211.5 100.7V115.8M212.5 98.4V118.9M213.5 100.1V115.0M214.5 99.9V120.3M215.5 100.1V129.9M216.5 98.4V114.7M217.5 99.6V124.3M218.5 101.0V124.1M219.5 98.9V115.2M220.5 100.5V119.9M221.5 98.5V118.7M222.5 98.9V117.7M223.5 99.8V119.4M224.5 98.4V122.4M225.5 98.8V115.7M226.5 98.1V114.7M227.5 99.8V116.1M228.5 100.1V117.8M229.5 101.0V118.3M230.5 99.3V118.5M231.5 99.6V126.9M232.5 100.2V117.7M233.5 100.3V120.6M234.5 99.3V122.5M235.5 99.6V115.5M236.5 98.7V118.6M237.5 100.0V116.1M238.5 98.7V116.8M239.5 98.3V114.6M240.5 98.1V123.9M241.5 100.7V128.1M242.5 93.4V115.5M243.5 100.8V120.8M244.5 100.8V115.0M245.5 99.1V114.9M246.5 101.0V124.6M247.5 98.2V131.9M248.5 100.6V114.7M249.5 100.8V118.9M250.5 100.1V121.2M251.5 100.4V117.3M252.5 99.8V115.5M253.5 100.0V125.1M254.5 99.3V122.7M255.5 98.9V122.4M256.5 100.3V115.4M257.5 98.6V124.2M258.5 100.3V118.6M259.5 98.5V129.8M260.5 100.3V116.5M261.5 100.1V125.7M262.5 98.5V115.2M263.5 100.3V123.4M264.5 98.7V122.5M265.5 100.1V122.1M266.5 98.1V116.2M267.5 98.8V114.4M268.5 99.7V121.7M269.5 96.0V117.1M270.5 98.8V114.4M271.5 98.5V114.8M272.5 100.5V114.3M273.5 99.1V124.3M274.5 100.3V114.7M275.5 97.5V123.4M276.5 98.9V122.4M277.5 100.3V120.9M278.5 98.7V129.0M279.5 100.9V114.2M280.5 96.9V117.5M281.5 99.8V116.3M282.5 100.5V122.6M283.5 98.6V118.9M284.5 99.4V116.2M285.5 100.0V115.0M286.5 98.2V118.9M287.5 98.5V116.0M288.5 100.1V123.5M289.5 99.1V117.6M290.5 98.1V123.3M291.5 99.0V121.6M292.5 96.3V121.5M293.5 99.3V114.7M294.5 98.8V121.4M295.5 98.8V116.0M296.5 100.6V125.0M297.5 94.2V116.8M298.5 100.9V117.4M299.5 98.6V117.3M300.5 100.6V122.3M301.5 99.2V127.4M302.5 98.8V116.0M303.5 98.5V119.9M304.5 99.3V116.9M305.5 99.7V114.1M306.5 99.1V121.5M307.5 99.8V118.7M308.5 99.0V123.2M309.5 98.6V117.1M310.5 99.1V118.7M311.5 99.9V116.1M312.5 98.8V118.4M313.5 98.3V127.1M314.5 100.9V121.4M315.5 95.1V121.4M316.5 100.0V117.1M317.5 100.5V129.9M318.5 98.9V117.5M319.5 100.9V114.8M320.5 99.5V122.6M321.5 99.6V124.5M322.5 99.5V117.8M323.5 100.1V116.3M324.5 99.4V118.3M325.5 98.2V116.5M326.5 99.2V115.3M327.5 99.0V117.8M328.5 100.5V116.1M329.5 99.9V122.9M330.5 100.0V120.9M331.5 100.8V114.7" stroke="#f0f088" stroke-width="1" shape-rendering="crispEdges"/><path d="M26.5 36V100M23.5 93V100M31.5 115V139M1.5 64V120" stroke="#e8e8a0" stroke-width="1"/><text x="5" y="17" font-size="8" font-family="Liberation Sans" fill="#f4f4f4" stroke="#f4f4f4" stroke-width="0.25">0 dBFS</text><text x="5" y="49" font-size="8" font-family="Liberation Sans" fill="#f4f4f4" stroke="#f4f4f4" stroke-width="0.25">-40 dBFS</text><text x="5" y="82" font-size="8" font-family="Liberation Sans" fill="#f4f4f4" stroke="#f4f4f4" stroke-width="0.25">-80 dBFS</text><text x="68" y="160" font-size="8" font-family="Liberation Sans" fill="#f4f4f4" stroke="#f4f4f4" stroke-width="0.25">1 MHz</text></svg>
<div style="left:603px;top:281px;width:10px;height:164px;background:repeating-conic-gradient(#d4d0c8 0 25%,#fff 0 50%) 0 0/2px 2px"></div>
<div style="left:603px;top:282px;width:10px;height:12px;background:#d4d0c8;box-shadow:inset -1px -1px #404040,inset 1px 1px #fff,inset -2px -2px #808080,inset 2px 2px #d4d0c8;"></div>
<svg style="position:absolute;left:603px;top:282px;" width="10" height="12" viewBox="0 0 10 12"><path d="M2.0 7.5h6l-3-3z" fill="#000"/></svg>
<div style="left:603px;top:294px;width:10px;height:150px;background:#d4d0c8;box-shadow:inset -1px -1px #404040,inset 1px 1px #fff,inset -2px -2px #808080,inset 2px 2px #d4d0c8;"></div>
<div style="left:268px;top:451px;width:332px;height:9px;background:repeating-conic-gradient(#d4d0c8 0 25%,#fff 0 50%) 0 0/2px 2px"></div>
<div style="left:268px;top:451px;width:12px;height:9px;background:#d4d0c8;box-shadow:inset -1px -1px #404040,inset 1px 1px #fff,inset -2px -2px #808080,inset 2px 2px #d4d0c8;"></div>
<svg style="position:absolute;left:268px;top:451px;" width="12" height="9" viewBox="0 0 12 9"><path d="M7.5 1.5v6l-3-3z" fill="#000"/></svg>
<div style="left:616px;top:58px;width:1px;height:408px;background:#808080"></div>
<div style="left:617px;top:58px;width:1px;height:408px;background:#fff"></div>
<div style="left:621px;top:62px;width:21px;height:1px;background:#fff"></div>
<div style="left:621px;top:63px;width:21px;height:1px;background:#808080"></div>
<div style="left:621px;top:65px;width:21px;height:1px;background:#fff"></div>
<div style="left:621px;top:66px;width:21px;height:1px;background:#808080"></div>
<div style="left:623px;top:71px;width:17px;height:17px;background:#d4d0c8;border:1px solid #909090;box-sizing:border-box"></div>
<svg style="position:absolute;left:623px;top:71px;" width="17" height="17" viewBox="0 0 17 17"><rect x="1" y="1" width="15" height="15" fill="#d8e8d8"/><path d="M2 3.5h13M2 6.5h13M2 9.5h13M2 12.5h13M3.5 2v13M6.5 2v13M9.5 2v13M12.5 2v13" stroke="#10a010" stroke-width="1.2" stroke-dasharray="1.5 1.5"/></svg>
<div style="left:619px;top:91px;width:24px;height:1px;background:#808080"></div>
<div style="left:619px;top:92px;width:24px;height:1px;background:#fff"></div>
<div style="left:623px;top:94px;width:17px;height:17px;background:#d4d0c8;border:1px solid #707070;box-sizing:border-box"></div>
<svg style="position:absolute;left:623px;top:94px;" width="17" height="17" viewBox="0 0 17 17"><rect x="1" y="1" width="15" height="15" fill="#c8c8c8"/><path d="M8.5 2V15" stroke="#e02020" stroke-dasharray="2 1.5"/></svg>
<div style="left:623px;top:117px;width:17px;height:17px;background:#d4d0c8;border:1px solid #101010;box-sizing:border-box"></div>
<svg style="position:absolute;left:623px;top:117px;" width="17" height="17" viewBox="0 0 17 17"><path d="M2 6h13M2 11h13" stroke="#e02020" stroke-width="1.5" stroke-dasharray="3 1"/><path d="M2 13h5V4h8" stroke="#202020" fill="none"/></svg>
<div style="left:623px;top:140px;width:17px;height:17px;background:#d4d0c8;border:1px solid #101010;box-sizing:border-box"></div>
<svg style="position:absolute;left:623px;top:140px;" width="17" height="17" viewBox="0 0 17 17"><rect x="2" y="2" width="6" height="6" fill="#3060b0"/><rect x="9" y="9" width="6" height="6" fill="#e01010"/></svg>
<div style="left:623px;top:163px;width:17px;height:17px;background:#d4d0c8;border:1px solid #101010;box-sizing:border-box"></div>
<svg style="position:absolute;left:623px;top:163px;" width="17" height="17" viewBox="0 0 17 17"><path d="M1 5.5q1.5-2 3 0t3 0 3 0 3 0 3 0" stroke="#20a020" fill="none" stroke-width="1.3"/><path d="M1 9q1.5-2 3 0t3 0 3 0 3 0 3 0" stroke="#2040d0" fill="none" stroke-width="1.3"/><path d="M1 12.5q1.5-2 3 0t3 0 3 0 3 0 3 0" stroke="#e03030" fill="none" stroke-width="1.3"/></svg>
<div style="left:620px;top:183px;width:23px;height:23px;background:#d4d0c8;box-shadow:inset -1px -1px #808080,inset 1px 1px #fff;"></div>
<div style="left:623px;top:186px;width:17px;height:17px;background:#d4d0c8;border:1px solid #101010;box-sizing:border-box"></div>
<svg style="position:absolute;left:623px;top:186px;" width="17" height="17" viewBox="0 0 17 17"><rect x="1" y="1" width="15" height="15" fill="#f0f0f0"/><path d="M1 4.5h15M1 12.5h15M4.5 1v15M12.5 1v15" stroke="#a0a0a0" stroke-width="0.7"/><path d="M5.5 1v15M10.5 1v15" stroke="#e02020" stroke-width="1.2"/><path d="M1 8.5h15" stroke="#2040d0" stroke-width="1.3"/></svg>
<div style="left:620px;top:206px;width:23px;height:23px;background:#d4d0c8;box-shadow:inset -1px -1px #808080,inset 1px 1px #fff;"></div>
<div style="left:623px;top:209px;width:17px;height:17px;background:#d4d0c8;border:1px solid #101010;box-sizing:border-box"></div>
<svg style="position:absolute;left:623px;top:209px;" width="17" height="17" viewBox="0 0 17 17"><rect x="3.5" y="3.5" width="8" height="8" fill="none" stroke="#000"/><rect x="5.5" y="5.5" width="8" height="8" fill="none" stroke="#000"/></svg>
<div style="left:623px;top:232px;width:17px;height:17px;background:#d4d0c8;border:1px solid #101010;box-sizing:border-box"></div>
<svg style="position:absolute;left:623px;top:232px;" width="17" height="17" viewBox="0 0 17 17"><path d="M4 3v11h10" stroke="#000" fill="none" stroke-width="1.2"/><path d="M2.5 5L4 2.5 5.5 5M12 12.5l2 1.5-2 1.5" stroke="#000" fill="none"/><rect x="7.5" y="4.5" width="5" height="5" fill="none" stroke="#000"/></svg>
<div style="left:623px;top:256px;width:17px;height:17px;background:#d4d0c8;border:1px solid #101010;box-sizing:border-box"></div>
<svg style="position:absolute;left:623px;top:256px;" width="17" height="17" viewBox="0 0 17 17"><path d="M3 8.5h11M8.5 3v11" stroke="#000" stroke-width="1.5"/></svg>
<div style="left:623px;top:279px;width:17px;height:17px;background:#d4d0c8;border:1px solid #101010;box-sizing:border-box"></div>
<svg style="position:absolute;left:623px;top:279px;" width="17" height="17" viewBox="0 0 17 17"><path d="M3 8.5h11" stroke="#000" stroke-width="1.5"/></svg>
<div style="left:623px;top:302px;width:17px;height:17px;background:#d4d0c8;border:1px solid #101010;box-sizing:border-box"></div>
<svg style="position:absolute;left:623px;top:302px;" width="17" height="17" viewBox="0 0 17 17"><path d="M8.5 4v9M4 8.5h9" stroke="#000" stroke-width="1.2"/><path d="M6 5L8.5 2 11 5zM6 12l2.5 3 2.5-3zM5 6L2 8.5 5 11zM12 6l3 2.5-3 2.5z" fill="#000"/></svg>
<div style="left:623px;top:325px;width:17px;height:17px;background:#d4d0c8;border:1px solid #101010;box-sizing:border-box"></div>
<svg style="position:absolute;left:623px;top:325px;" width="17" height="17" viewBox="0 0 17 17"><path d="M8.5 2v5" stroke="#000" stroke-width="1.2"/><path d="M6 5l2.5 3 2.5-3z" fill="#000"/><path d="M3 8.5h11" stroke="#000" stroke-width="1.2"/></svg>
<div style="left:370px;top:330px;width:429px;height:190px;background:#d4d0c8;box-shadow:inset 1px 1px #d4d0c8,inset 2px 2px #fff,inset -1px 0 #404040,inset -2px 0 #808080"></div>
<div style="left:374px;top:333px;width:74px;height:14px;background:#404040"></div>
<div style="left:448px;top:333px;width:188px;height:14px;background:#3d6aa8"></div>
<div style="left:636px;top:333px;width:39px;height:14px;background:#8a8a8a"></div>
<div style="left:655px;top:333px;width:1px;height:14px;background:#5a7ab0"></div>
<div style="left:675px;top:333px;width:121px;height:14px;background:#c0c0c0"></div>
<svg style="position:absolute;left:375px;top:334px;" width="13" height="12" viewBox="0 0 13 12"><rect x="0" y="0" width="13" height="12" fill="#eeeef4"/><ellipse cx="7" cy="6" rx="5" ry="4" fill="#404050" transform="rotate(-40 7 6)"/><circle cx="5.5" cy="3" r="0.9" fill="#fff"/><circle cx="9" cy="3.7" r="1" fill="#c8c8e0"/><circle cx="10" cy="6.5" r="0.9" fill="#d0d0e8"/><path d="M2.5 10l-1 1M5.5 10.5l-0.5 1.5M8.5 10l1 1.5M10.5 8.5l1.5 1" stroke="#904040" stroke-width="0.9"/></svg>
<div class="t" style="left:389px;top:334.00px;font-size:9.2px;line-height:12px;color:#fff;font-weight:bold;letter-spacing:-0.147px;">Channel Trigger : AI-Ch1</div>
<svg style="position:absolute;left:741px;top:334px;" width="13" height="11" viewBox="0 0 13 11"><rect x="1.5" y="2.5" width="10" height="6" fill="#d4d0c8" stroke="#000"/><rect x="3.5" y="0.5" width="6" height="3" fill="#fff" stroke="#000"/><path d="M3 6.5h7" stroke="#000"/><rect x="0" y="9" width="13" height="2" fill="#606060"/></svg>
<div style="left:769px;top:335px;width:11px;height:10px;background:#d4d0c8;box-shadow:inset -1px -1px #404040,inset 1px 1px #fff,inset -2px -2px #808080,inset 2px 2px #d4d0c8;"></div>
<div class="t" style="left:772px;top:334.00px;font-size:8px;line-height:12px;color:#000;font-weight:bold;letter-spacing:0.000px;">?</div>
<div style="left:783px;top:335px;width:11px;height:10px;background:#d4d0c8;box-shadow:inset -1px -1px #404040,inset 1px 1px #fff,inset -2px -2px #808080,inset 2px 2px #d4d0c8;"></div>
<svg style="position:absolute;left:783px;top:335px;" width="11" height="10" viewBox="0 0 11 10"><path d="M3 2.5L7 6.5M7 2.5L3 6.5" stroke="#000" stroke-width="1.6"/></svg>
<div style="left:375px;top:350px;width:167px;height:14px;background:#fff;box-shadow:inset 1px 1px #808080,inset -1px -1px #fff,inset 2px 2px #404040,inset -2px -2px #d4d0c8;"></div>
<div class="t" style="left:378px;top:351.00px;font-size:8.8px;line-height:12px;color:#000;letter-spacing:0.036px;">Standard</div>
<div style="left:529px;top:352px;width:11px;height:10px;background:#d4d0c8;box-shadow:inset -1px -1px #404040,inset 1px 1px #fff,inset -2px -2px #808080,inset 2px 2px #d4d0c8;"></div>
<svg style="position:absolute;left:529px;top:352px;" width="11" height="10" viewBox="0 0 11 10"><path d="M2.5 3.5h6l-3 3z" fill="#000"/></svg>
<div class="t" style="left:543px;top:351.00px;font-size:8.8px;line-height:12px;color:#000;letter-spacing:-0.317px;">Lvl 0</div>
<div style="left:562px;top:350px;width:65px;height:14px;background:#fff;box-shadow:inset 1px 1px #808080,inset -1px -1px #fff,inset 2px 2px #404040,inset -2px -2px #d4d0c8;"></div>
<div class="t" style="left:565px;top:351.00px;font-size:8.8px;line-height:12px;color:#000;letter-spacing:-0.345px;">2087,80 mV</div>
<div style="left:614px;top:352px;width:11px;height:5px;background:#d4d0c8;box-shadow:inset -1px -1px #404040,inset 1px 1px #fff,inset -2px -2px #808080,inset 2px 2px #d4d0c8;"></div>
<div style="left:614px;top:357px;width:11px;height:5px;background:#d4d0c8;box-shadow:inset -1px -1px #404040,inset 1px 1px #fff,inset -2px -2px #808080,inset 2px 2px #d4d0c8;"></div>
<svg style="position:absolute;left:614px;top:352px;" width="11" height="10" viewBox="0 0 11 10"><path d="M3.5 3.5h4l-2-2z M3.5 6.5h4l-2 2z" fill="#000"/></svg>
<div style="left:630px;top:352px;width:10px;height:10px;background:#fff;box-shadow:inset 1px 1px #808080,inset -1px -1px #fff,inset 2px 2px #404040,inset -2px -2px #d4d0c8;"></div>
<div class="t" style="left:643px;top:351.00px;font-size:8.8px;line-height:12px;color:#000;letter-spacing:-0.224px;">Lock Levels</div>
<div style="left:691px;top:350px;width:17px;height:14px;background:#d4d0c8;box-shadow:inset 1px 1px #808080,inset -1px -1px #fff;"></div>
<div class="t" style="left:693px;top:351.00px;font-size:8.8px;line-height:12px;color:#000;letter-spacing:0.264px;">8 V</div>
<div style="left:711px;top:350px;width:65px;height:14px;background:#fff;box-shadow:inset 1px 1px #808080,inset -1px -1px #fff,inset 2px 2px #404040,inset -2px -2px #d4d0c8;"></div>
<div class="t" style="left:714px;top:351.00px;font-size:8.8px;line-height:12px;color:#000;letter-spacing:0.051px;">-800,00 mV</div>
<div style="left:763px;top:352px;width:11px;height:5px;background:#d4d0c8;box-shadow:inset -1px -1px #404040,inset 1px 1px #fff,inset -2px -2px #808080,inset 2px 2px #d4d0c8;"></div>
<div style="left:763px;top:357px;width:11px;height:5px;background:#d4d0c8;box-shadow:inset -1px -1px #404040,inset 1px 1px #fff,inset -2px -2px #808080,inset 2px 2px #d4d0c8;"></div>
<svg style="position:absolute;left:763px;top:352px;" width="11" height="10" viewBox="0 0 11 10"><path d="M3.5 3.5h4l-2-2z M3.5 6.5h4l-2 2z" fill="#000"/></svg>
<div class="t" style="left:778px;top:351.00px;font-size:8.8px;line-height:12px;color:#000;letter-spacing:-0.517px;">Lvl 1</div>
<div style="left:375px;top:367px;width:167px;height:120px;box-shadow:inset 1px 1px #808080,inset -1px -1px #fff,inset 2px 2px #fff,inset -2px -2px #808080"></div>
<svg style="position:absolute;left:389px;top:384.5px;" width="11" height="11" viewBox="0 0 11 11"><circle cx="5.5" cy="5.5" r="4.8" fill="#fff" stroke="#808080"/><path d="M1.5 8A4.8 4.8 0 0 1 8 1.5" stroke="#404040" fill="none"/></svg>
<div class="t" style="left:403px;top:383.50px;font-size:8.8px;line-height:12px;color:#000;letter-spacing:-0.141px;">Positive edge</div>
<svg style="position:absolute;left:389px;top:403.7px;" width="11" height="11" viewBox="0 0 11 11"><circle cx="5.5" cy="5.5" r="4.8" fill="#fff" stroke="#808080"/><path d="M1.5 8A4.8 4.8 0 0 1 8 1.5" stroke="#404040" fill="none"/></svg>
<div class="t" style="left:403px;top:402.70px;font-size:8.8px;line-height:12px;color:#000;letter-spacing:-0.058px;">Negative edge</div>
<svg style="position:absolute;left:389px;top:422.9px;" width="11" height="11" viewBox="0 0 11 11"><circle cx="5.5" cy="5.5" r="4.8" fill="#fff" stroke="#808080"/><path d="M1.5 8A4.8 4.8 0 0 1 8 1.5" stroke="#404040" fill="none"/></svg>
<div class="t" style="left:403px;top:421.90px;font-size:8.8px;line-height:12px;color:#000;letter-spacing:-0.180px;">Positive and negative edge</div>
<svg style="position:absolute;left:389px;top:442.1px;" width="11" height="11" viewBox="0 0 11 11"><circle cx="5.5" cy="5.5" r="4.8" fill="#fff" stroke="#808080"/><circle cx="5.5" cy="5.5" r="1.8" fill="#000"/><path d="M1.5 8A4.8 4.8 0 0 1 8 1.5" stroke="#404040" fill="none"/></svg>
<div class="t" style="left:403px;top:441.10px;font-size:8.8px;line-height:12px;color:#000;letter-spacing:-0.226px;">Window for entering signals</div>
<svg style="position:absolute;left:389px;top:461.3px;" width="11" height="11" viewBox="0 0 11 11"><circle cx="5.5" cy="5.5" r="4.8" fill="#fff" stroke="#808080"/><path d="M1.5 8A4.8 4.8 0 0 1 8 1.5" stroke="#404040" fill="none"/></svg>
<div class="t" style="left:403px;top:460.30px;font-size:8.8px;line-height:12px;color:#000;letter-spacing:-0.276px;">Window for leaving signals</div>
<div style="left:379px;top:490px;width:45px;height:14px;background:#d4d0c8;box-shadow:inset -1px -1px #404040,inset 1px 1px #fff,inset -2px -2px #808080,inset 2px 2px #d4d0c8;"></div>
<div class="t" style="left:396px;top:491.00px;font-size:8.8px;line-height:12px;color:#000;letter-spacing:-0.123px;">Ok</div>
<div style="left:431px;top:490px;width:45px;height:14px;background:#d4d0c8;box-shadow:inset -1px -1px #404040,inset 1px 1px #fff,inset -2px -2px #808080,inset 2px 2px #d4d0c8;"></div>
<div class="t" style="left:440px;top:491.00px;font-size:8.8px;line-height:12px;color:#000;letter-spacing:-0.232px;">Cancel</div>
<div style="left:549px;top:367px;width:3px;height:104px;box-shadow:inset 1px 1px #808080,inset -1px -1px #fff"></div>
<div style="left:544px;top:395px;width:13px;height:8px;background:#d4d0c8;box-shadow:inset -1px -1px #404040,inset 1px 1px #fff,inset -2px -2px #808080,inset 2px 2px #d4d0c8;"></div>
<svg style="position:absolute;left:558px;top:368px;" width="224" height="103" viewBox="0 0 224 103"><rect width="224" height="103" fill="#000"/><path d="M15.40 16V88M34.63 16V88M53.86 16V88M73.09 16V88M92.32 16V88M111.55 16V88M130.78 16V88M150.01 16V88M169.24 16V88M188.47 16V88M207.70 16V88M15.399999999999977 16.00H207.70000000000005M15.399999999999977 23.20H207.70000000000005M15.399999999999977 30.40H207.70000000000005M15.399999999999977 37.60H207.70000000000005M15.399999999999977 44.80H207.70000000000005M15.399999999999977 52.00H207.70000000000005M15.399999999999977 59.20H207.70000000000005M15.399999999999977 66.40H207.70000000000005M15.399999999999977 73.60H207.70000000000005M15.399999999999977 80.80H207.70000000000005M15.399999999999977 88.00H207.70000000000005" stroke="#2a9a2a" stroke-width="1" fill="none"/><clipPath id="hc"><rect x="15.4" y="37" width="192.3" height="20"/></clipPath><path d="M-14 37l21 21M-8 37l21 21M-2 37l21 21M4 37l21 21M10 37l21 21M16 37l21 21M22 37l21 21M28 37l21 21M34 37l21 21M40 37l21 21M46 37l21 21M52 37l21 21M58 37l21 21M64 37l21 21M70 37l21 21M76 37l21 21M82 37l21 21M88 37l21 21M94 37l21 21M100 37l21 21M106 37l21 21M112 37l21 21M118 37l21 21M124 37l21 21M130 37l21 21M136 37l21 21M142 37l21 21M148 37l21 21M154 37l21 21M160 37l21 21M166 37l21 21M172 37l21 21M178 37l21 21M184 37l21 21M190 37l21 21M196 37l21 21M202 37l21 21M208 37l21 21" stroke="#e8e8e8" stroke-width="1" clip-path="url(#hc)"/><path d="M15.399999999999977 37H207.70000000000005M15.399999999999977 57H207.70000000000005" stroke="#e02818" stroke-width="1.4"/><polyline points="15.5,51.0 16.3,51.9 17.3,53.1 18.6,54.6 20.0,56.3 21.5,58.2 23.0,60.0 24.7,61.8 26.2,63.4 27.8,64.9 29.2,66.0 30.5,66.7 31.6,67.0 32.5,66.8 33.3,66.4 34.0,65.6 34.7,64.7 35.2,63.4 35.8,62.0 36.3,60.5 36.8,58.7 37.4,56.9 38.1,55.0 38.8,53.0 39.6,51.0 40.5,48.7 41.5,45.8 42.6,42.5 43.7,38.9 44.9,35.3 46.1,31.7 47.2,28.2 48.4,25.1 49.6,22.4 50.7,20.3 51.8,18.9 52.8,18.4 53.7,18.8 54.7,20.0 55.5,21.9 56.4,24.4 57.2,27.3 58.0,30.6 58.8,34.1 59.6,37.7 60.4,41.3 61.2,44.8 62.1,48.0 63.0,51.0 63.9,54.0 64.9,57.3 65.9,60.9 66.9,64.6 67.9,68.3 68.9,71.9 69.9,75.2 70.9,78.3 71.9,80.8 72.9,82.8 73.9,84.1 74.8,84.5 75.7,84.0 76.6,82.6 77.6,80.4 78.5,77.6 79.4,74.3 80.2,70.7 81.1,67.0 82.0,63.2 82.8,59.6 83.7,56.2 84.5,53.3 85.3,51.0 86.1,49.1 86.8,47.2 87.5,45.5 88.1,43.9 88.7,42.5 89.4,41.2 90.0,40.0 90.7,39.0 91.4,38.2 92.2,37.6 93.1,37.2 94.0,37.0 95.0,37.2 96.1,37.8 97.3,38.7 98.4,40.0 99.7,41.4 101.0,42.9 102.3,44.4 103.6,45.8 104.9,47.1 106.3,48.1 107.6,48.8 109.0,49.0 110.4,48.8 111.8,48.1 113.3,47.1 114.9,45.8 116.4,44.4 118.0,42.9 119.5,41.4 121.0,40.0 122.5,38.7 123.9,37.8 125.2,37.2 126.4,37.0 127.5,37.2 128.6,37.6 129.5,38.2 130.4,39.0 131.3,40.0 132.1,41.2 132.9,42.5 133.7,43.9 134.5,45.5 135.3,47.2 136.1,49.1 137.0,51.0 137.9,53.3 138.9,56.2 139.8,59.6 140.7,63.2 141.7,67.0 142.7,70.7 143.6,74.3 144.6,77.6 145.5,80.4 146.5,82.6 147.4,84.0 148.4,84.5 149.4,84.1 150.3,82.8 151.3,80.9 152.2,78.3 153.2,75.3 154.1,72.0 155.1,68.4 156.1,64.7 157.0,61.0 157.9,57.4 158.9,54.0 159.8,51.0 160.7,48.0 161.6,44.5 162.4,40.9 163.3,37.1 164.1,33.3 164.9,29.6 165.8,26.2 166.6,23.1 167.5,20.5 168.4,18.5 169.4,17.2 170.4,16.7 171.5,17.2 172.6,18.7 173.8,20.9 175.0,23.7 176.3,27.0 177.6,30.7 178.8,34.5 180.1,38.3 181.3,42.1 182.4,45.5 183.5,48.5 184.5,51.0 185.4,53.1 186.2,55.2 186.9,57.2 187.6,59.1 188.3,60.9 188.9,62.5 189.5,64.0 190.1,65.3 190.8,66.3 191.6,67.1 192.4,67.5 193.3,67.7 194.3,67.4 195.5,66.7 196.8,65.5 198.2,64.0 199.6,62.3 201.0,60.4 202.4,58.5 203.8,56.6 205.0,54.8 206.1,53.2 207.0,51.9 207.70000000000005,51" stroke="#d8d838" fill="none" stroke-width="0.9"/><path d="M38 44V64" stroke="#fff" stroke-width="1.2"/><path d="M59.5 25V44" stroke="#fff" stroke-width="1.2"/><path d="M98.5 22V44" stroke="#fff" stroke-width="1.2"/><path d="M158 51V67" stroke="#fff" stroke-width="1.2"/><path d="M178.29999999999995 25V42" stroke="#fff" stroke-width="1.2"/><path d="M207 44V58" stroke="#fff" stroke-width="1.2"/><text x="9" y="15" font-size="7.8" font-family="Liberation Sans" fill="#30d030">5 V</text><text x="3" y="55.5" font-size="7.8" font-family="Liberation Sans" fill="#30d030">0 V</text><text x="8" y="98" font-size="7.8" font-family="Liberation Sans" fill="#30d030">-5 V</text><text x="20" y="35" font-size="7.8" font-family="Liberation Sans" fill="#f0f0f0">Lvl0</text><text x="57" y="24" font-size="7.8" font-family="Liberation Sans" fill="#f0f0f0">Trig</text><text x="96" y="28" font-size="7.8" font-family="Liberation Sans" fill="#f0f0f0">Trig</text><text x="34" y="73" font-size="7.8" font-family="Liberation Sans" fill="#f0f0f0">Trig</text><text x="83" y="72" font-size="7.8" font-family="Liberation Sans" fill="#f0f0f0">Trig</text><text x="154" y="72" font-size="7.8" font-family="Liberation Sans" fill="#f0f0f0">Trig</text><text x="175" y="24" font-size="7.8" font-family="Liberation Sans" fill="#f0f0f0">Trig</text><text x="192" y="64" font-size="7.8" font-family="Liberation Sans" fill="#f0f0f0">Lvl1</text><text x="197" y="72" font-size="7.8" font-family="Liberation Sans" fill="#f0f0f0">Trig</text></svg>
<div style="left:788px;top:367px;width:3px;height:104px;box-shadow:inset 1px 1px #808080,inset -1px -1px #fff"></div>
<div style="left:782px;top:423px;width:13px;height:9px;background:#d4d0c8;box-shadow:inset -1px -1px #404040,inset 1px 1px #fff,inset -2px -2px #808080,inset 2px 2px #d4d0c8;"></div>
<div style="left:568px;top:480px;width:212px;height:3px;box-shadow:inset 1px 1px #808080,inset -1px -1px #fff"></div>
<div style="left:559px;top:474px;width:9px;height:13px;background:#d4d0c8;box-shadow:inset -1px -1px #404040,inset 1px 1px #fff,inset -2px -2px #808080,inset 2px 2px #d4d0c8;"></div>
<div style="left:557px;top:490px;width:1px;height:18px;background:#f8f8f8"></div>
<div style="left:637px;top:490px;width:1px;height:18px;background:#f8f8f8"></div>
<div style="left:563px;top:493px;width:11px;height:11px;background:#fff;box-shadow:inset 1px 1px #808080,inset -1px -1px #fff,inset 2px 2px #404040,inset -2px -2px #d4d0c8;"></div>
<div class="t" style="left:576px;top:492.50px;font-size:8.8px;line-height:12px;color:#000;letter-spacing:-0.344px;">Update Directly</div>
<div class="t" style="left:641px;top:492.50px;font-size:8.8px;line-height:12px;color:#a0a0a0;letter-spacing:-1.088px;">PW</div>
<div style="left:656px;top:491px;width:59px;height:15px;background:#d4d0c8;box-shadow:inset 1px 1px #808080,inset -1px -1px #fff,inset 2px 2px #404040,inset -2px -2px #d4d0c8;"></div>
<div class="t" style="left:659px;top:492.50px;font-size:8.8px;line-height:12px;color:#a0a0a0;letter-spacing:0.000px;">0</div>
<div style="left:720px;top:491px;width:13px;height:7px;background:#d4d0c8;box-shadow:inset -1px -1px #404040,inset 1px 1px #fff,inset -2px -2px #808080,inset 2px 2px #d4d0c8;"></div>
<div style="left:720px;top:498px;width:13px;height:8px;background:#d4d0c8;box-shadow:inset -1px -1px #404040,inset 1px 1px #fff,inset -2px -2px #808080,inset 2px 2px #d4d0c8;"></div>
<div style="left:734px;top:490px;width:61px;height:15px;background:#dcdad6;box-shadow:inset -1px -1px #303030,inset 1px 1px #fff"></div>
<svg style="position:absolute;left:734px;top:490px;" width="61" height="15" viewBox="0 0 61 15"><path d="M38 15 L46 6 H60 V15 Z" fill="#b8b8b8"/><path d="M38 15 L46 6" stroke="#fff"/></svg>
<div class="t" style="left:737px;top:491.50px;font-size:9.6px;line-height:12px;color:#000;letter-spacing:-0.050px;">Samples</div>
<div class="t" style="left:775px;top:494.50px;font-size:7.2px;line-height:12px;color:#fff;letter-spacing:0.566px;">Time</div>
</body></html>
